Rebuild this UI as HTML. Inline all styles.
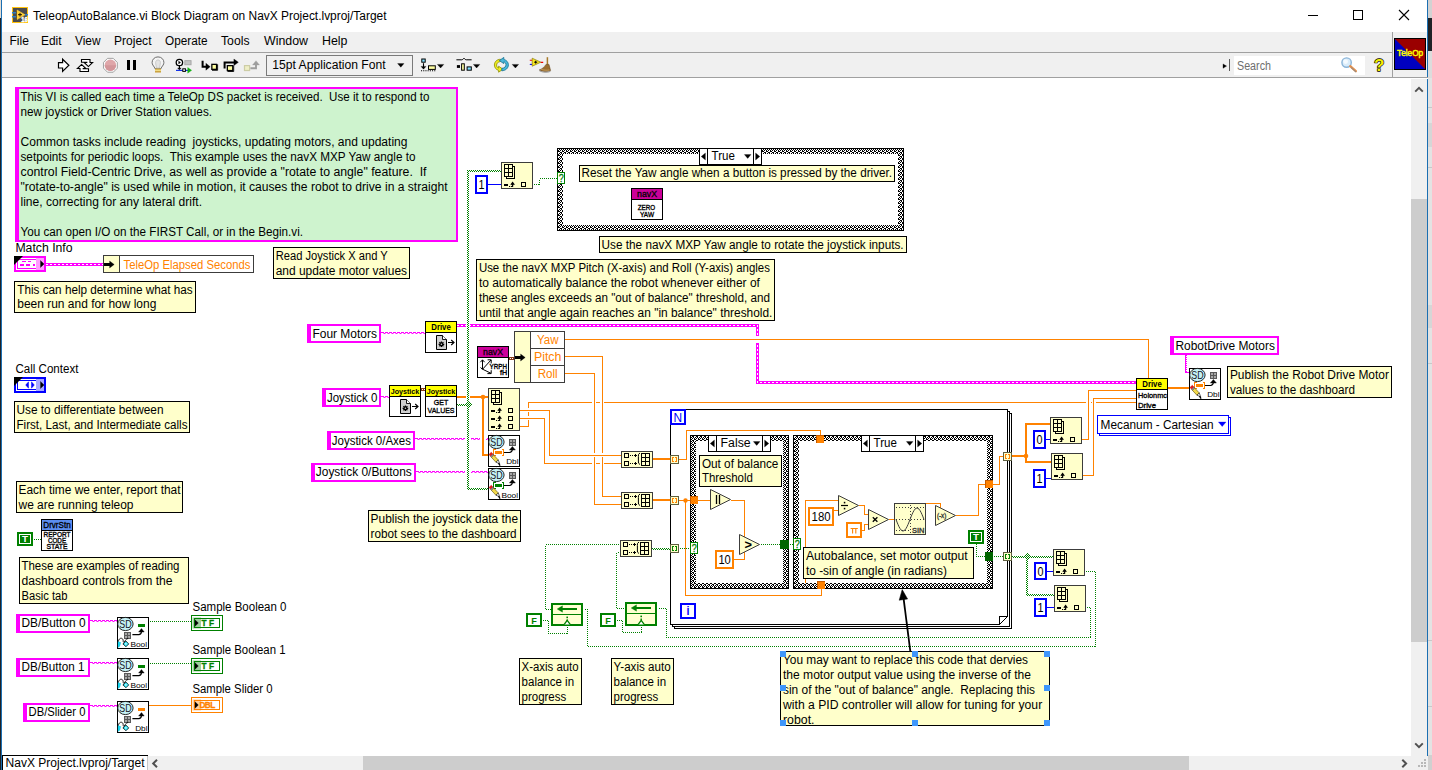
<!DOCTYPE html>
<html><head><meta charset="utf-8"><title>TeleopAutoBalance.vi Block Diagram</title>
<style>
html,body{margin:0;padding:0;background:#fff;overflow:hidden}
body{width:1432px;height:770px;position:relative}
svg{position:absolute;left:0;top:0;display:block}
svg text{font-family:"Liberation Sans",sans-serif;white-space:pre}
.mono{font-family:"Liberation Mono",monospace}
</style></head><body>
<svg width="1432" height="770" viewBox="0 0 1432 770">
<defs>
<pattern id="chk" width="2" height="2" patternUnits="userSpaceOnUse"><rect width="2" height="2" fill="#fff"/><rect width="1" height="1" fill="#000"/><rect x="1" y="1" width="1" height="1" fill="#000"/></pattern>
</defs>
<rect x="0" y="0" width="2" height="770" fill="#1f2226" />
<rect x="0" y="0" width="1" height="18" fill="#e4ddd6" />
<rect x="1" y="0" width="1" height="770" fill="#1b6fb2" />
<rect x="1428" y="0" width="4" height="770" fill="#e3e3e3" />
<rect x="1428" y="0" width="4" height="18" fill="#d2d2d2" />
<rect x="1428" y="18" width="4" height="33" fill="#1f2226" />
<rect x="1428" y="51" width="4" height="27" fill="#dcdcdc" />
<rect x="1428" y="107" width="4" height="1" fill="#c8c8c8" />
<rect x="1428" y="123" width="4" height="24" fill="#d6d6d6" />
<rect x="1428" y="167" width="4" height="1" fill="#c8c8c8" />
<rect x="1428" y="305" width="4" height="23" fill="#d6d6d6" />
<rect x="1428" y="363" width="4" height="1" fill="#c8c8c8" />
<rect x="1428" y="640" width="4" height="1" fill="#c8c8c8" />
<rect x="1428" y="706" width="4" height="1" fill="#c8c8c8" />
<rect x="1428" y="755" width="4" height="15" fill="#d0d0d0" />
<rect x="1427" y="0" width="1" height="770" fill="#1b6fb2" />
<rect x="2" y="0" width="1425" height="32" fill="#fff" />
<rect x="12.5" y="7.5" width="15" height="15" fill="#4b4b4d" stroke="#ffc20e" stroke-width="1" />
<path d="M12 12.7h4M12 16.7h4M25 14.7h3" stroke="#2f7fc1" stroke-width="1.6" fill="none" />
<path d="M16.5 10.5v9" stroke="#2a2a2a" stroke-width="1" fill="none" />
<path d="M17 10 L25 14.8 L17 19.5Z" stroke="#ffd23a" stroke-width="0.6" fill="#ffcf33" />
<path d="M18 14.7h4M20 12.9v3.6" stroke="#000" stroke-width="0.9" fill="none" />
<text x="21.2" y="22.0" font-size="7.4" fill="#fff" font-weight="bold" textLength="6.4" lengthAdjust="spacingAndGlyphs" stroke="#fff" stroke-width="0.5">16</text>
<text x="33.0" y="19.9" font-size="12" fill="#000" textLength="353.5" lengthAdjust="spacingAndGlyphs" >TeleopAutoBalance.vi Block Diagram on NavX Project.lvproj/Target</text>
<path d="M1308 15.5h10" stroke="#000" stroke-width="1" fill="none" shape-rendering="crispEdges"/>
<rect x="1353.5" y="10.5" width="9" height="9" fill="none" stroke="#000" stroke-width="1" shape-rendering="crispEdges"/>
<path d="M1399 10 L1409 20 M1409 10 L1399 20" stroke="#000" stroke-width="1.1" fill="none" />
<rect x="2" y="32" width="1425" height="46" fill="#f0f0f0" />
<text x="9.4" y="45.3" font-size="12" fill="#000" textLength="19.5" lengthAdjust="spacingAndGlyphs" >File</text>
<text x="41.0" y="45.3" font-size="12" fill="#000" textLength="20.5" lengthAdjust="spacingAndGlyphs" >Edit</text>
<text x="75.0" y="45.3" font-size="12" fill="#000" textLength="25.5" lengthAdjust="spacingAndGlyphs" >View</text>
<text x="114.0" y="45.3" font-size="12" fill="#000" textLength="37.5" lengthAdjust="spacingAndGlyphs" >Project</text>
<text x="165.0" y="45.3" font-size="12" fill="#000" textLength="42.5" lengthAdjust="spacingAndGlyphs" >Operate</text>
<text x="221.0" y="45.3" font-size="12" fill="#000" textLength="28.5" lengthAdjust="spacingAndGlyphs" >Tools</text>
<text x="264.0" y="45.3" font-size="12" fill="#000" textLength="44.0" lengthAdjust="spacingAndGlyphs" >Window</text>
<text x="322.0" y="45.3" font-size="12" fill="#000" textLength="25.5" lengthAdjust="spacingAndGlyphs" >Help</text>
<rect x="2" y="52" width="1391" height="1" fill="#a0a0a0" />
<rect x="2" y="77" width="1426" height="1" fill="#a0a0a0" />
<rect x="2" y="78" width="1426" height="1" fill="#fff" />
<rect x="1392" y="32" width="1" height="46" fill="#a0a0a0" />
<rect x="1394.5" y="38.5" width="31" height="31" fill="#0000c0" stroke="#000" stroke-width="1" />
<path d="M1395 39 H1425 V69 Z" stroke="#9a0000" stroke-width="0" fill="#9a0000" />
<text x="1397.0" y="56.3" font-size="8.6" fill="#ffff00" textLength="26.2" lengthAdjust="spacingAndGlyphs" stroke="#ffff00" stroke-width="0.45">TeleOp</text>
<rect x="2" y="79" width="1409" height="677" fill="#fff" />
<path d="M58.5 62.6H62.6V59.2L68.9 65.3L62.6 71.4V68H58.5Z" stroke="#000" stroke-width="1.2" fill="#fff" />
<path d="M81.5 59.5H90V62.5H92.6L88.4 66.6L84.2 62.5H86.8V62.2H81.5Z" stroke="#000" stroke-width="1.1" fill="#fff" />
<path d="M88.5 71.5H80V68.5H77.4L81.6 64.4L85.8 68.5H83.2V68.8H88.5Z" stroke="#000" stroke-width="1.1" fill="#fff" />
<polygon points="117.33,68.17 113.27,72.23 107.53,72.23 103.47,68.17 103.47,62.43 107.53,58.37 113.27,58.37 117.33,62.43" fill="#fbfbfb" stroke="#8e8e8e" stroke-width="0.8"/>
<circle cx="110.4" cy="65.3" r="5.7" fill="#dfa6a9"/>
<path d="M104.7 65.3a5.7 5.7 0 0 0 11.4 0z" fill="#d3969a"/>
<rect x="127" y="60" width="3" height="10" fill="#000" />
<rect x="133" y="60" width="3" height="10" fill="#000" />
<path d="M158 56.9c-3.5 0-5.9 2.6-5.9 5.5 0 2.2 1.3 3.3 2.1 4.6.5.8.7 1.2.7 1.6h6.2c0-.4.2-.8.7-1.6.8-1.3 2.1-2.4 2.1-4.6 0-2.9-2.4-5.5-5.9-5.5z" stroke="#6e6e6e" stroke-width="1" fill="#f4f4f4" />
<path d="M155.6 62.6c.2-2 1.2-2.6 2.4-2.6s2.2.6 2.4 2.6l-.8 5.4h-3.2z" stroke="#c2c2c2" stroke-width="0.8" fill="#e4e4e4" />
<rect x="155" y="68.6" width="6" height="1.3" fill="#d8b040" />
<rect x="155" y="69.9" width="6" height="1.2" fill="#f0dc88" />
<rect x="155" y="71.1" width="6" height="1.4" fill="#c89c30" />
<circle cx="179.4" cy="62.5" r="3.2" fill="#fff" stroke="#000" stroke-width="1.3"/>
<path d="M178.6 61l2 1.5-2 1.5z" stroke="#000" stroke-width="0.3" fill="#000" />
<path d="M179.4 65.8v3.4" stroke="#000" stroke-width="1.2" fill="none" />
<path d="M177.6 68l1.8 1.9 1.8-1.9z" stroke="#000" stroke-width="0.3" fill="#000" />
<rect x="184.85" y="60.65" width="6.2" height="4.1" fill="#c3c3c3" stroke="#a4a4a4" stroke-width="0.9" />
<path d="M176 70.4h12" stroke="#1432e6" stroke-width="1.2" fill="none" />
<rect x="182.8" y="68.8" width="2.6" height="2.6" fill="#fff" stroke="#000" stroke-width="1" />
<path d="M187.7 67.4l4 2.9-4 2.9z" stroke="#10b010" stroke-width="0.3" fill="#10b010" />
<path d="M202.6 60.8v6h4" stroke="#000" stroke-width="2" fill="none" />
<path d="M205.9 63.2l4.3 3.5-4.3 3.5z" stroke="#000" stroke-width="0.3" fill="#000" />
<rect x="211.85" y="64.35" width="4.7" height="5" fill="#ffffa2" stroke="#000" stroke-width="1.3" />
<path d="M212 70.3h5.6v-6" stroke="#000" stroke-width="0.9" fill="none" />
<rect x="227.35" y="65.65" width="5.4" height="4.9" fill="#ffffa2" stroke="#000" stroke-width="1.3" />
<path d="M227.5 71.5h6.2v-6" stroke="#000" stroke-width="0.9" fill="none" />
<path d="M224.6 68.6v-6.2h9.6" stroke="#000" stroke-width="2" fill="none" />
<path d="M233.9 59l4.5 3.3-4.5 3.3z" stroke="#000" stroke-width="0.3" fill="#000" />
<rect x="244.5" y="65.6" width="5.1" height="4.9" fill="#efefc6" stroke="#cdcda6" stroke-width="1.2" />
<path d="M250.4 68.2h5.6v-3.6" stroke="#9e9e9e" stroke-width="1.9" fill="none" />
<path d="M252.5 65l3.5-4.3 3.5 4.3z" stroke="#9e9e9e" stroke-width="0.3" fill="#9e9e9e" />
<rect x="266.5" y="55.5" width="146" height="20" fill="#f0f0f0" stroke="#7a7a7a" stroke-width="1" />
<text x="272.3" y="69.0" font-size="12" fill="#000" textLength="113.3" lengthAdjust="spacingAndGlyphs" >15pt Application Font</text>
<path d="M397.6 63.6h6.4l-3.2 3.6z" stroke="#000" stroke-width="0.3" fill="#000" />
<rect x="421.8" y="59" width="3.4" height="3.2" fill="#7fe0ff" stroke="#000" stroke-width="1" />
<path d="M423.5 63.2v5" stroke="#000" stroke-width="1.1" fill="none" />
<path d="M421 66.4h5l-2.5 2.8z" stroke="#000" stroke-width="0.3" fill="#000" />
<path d="M421 70.7h15" stroke="#000" stroke-width="1.1" fill="none" stroke-dasharray="1.1 1.1"/>
<rect x="428.5" y="65.8" width="6.8" height="3.6" fill="#ffffa2" stroke="#000" stroke-width="1" />
<path d="M437.4 64.4h6.4l-3.2 3.6z" stroke="#000" stroke-width="0.3" fill="#000" />
<path d="M456.4 59.8h5.4c1.4 0 1.6-1.6 2.2-1.6s.8 1.6 2.2 1.6h5.4" stroke="#000" stroke-width="1" fill="none" />
<rect x="456.9" y="65.1" width="3.1" height="2.8" fill="#000" />
<rect x="461.6" y="63.8" width="2.7" height="6.4" fill="#ffffa2" stroke="#000" stroke-width="1" />
<rect x="467.1" y="66.9" width="4.2" height="3.3" fill="#7fe0ff" stroke="#000" stroke-width="1" />
<path d="M473.4 64.4h6.4l-3.2 3.6z" stroke="#000" stroke-width="0.3" fill="#000" />
<path d="M500.4 59.2c-3.6.3-6 2.6-6 5.8 0 2.6 1.6 4.6 4.2 5.4l0 1.8 4.4-3-4.4-3 0 1.9c-1.3-.5-2-1.6-2-3 0-1.8 1.4-3.2 3.8-3.6z" stroke="#8c8c00" stroke-width="0.8" fill="#eeee20" />
<path d="M501.8 70.8c3.8-.2 6.6-2.6 6.6-6 0-2.6-1.8-4.6-4.6-5.4l0-2-4.4 3.2 4.4 3 0-1.8c1.4.5 2.2 1.6 2.2 3 0 1.8-1.6 3.3-4.2 3.6z" stroke="#107090" stroke-width="0.8" fill="#48b8dc" />
<path d="M512.2 64.4h6.4l-3.2 3.6z" stroke="#000" stroke-width="0.3" fill="#000" />
<path d="M529.8 60.2h2.6M540.6 62.4h2.6" stroke="#f00000" stroke-width="1.1" fill="none" />
<path d="M529.8 64.4h2.6" stroke="#0000f0" stroke-width="1.1" fill="none" />
<path d="M532.2 58.2l8.6 4-8.6 4z" stroke="#8a7a00" stroke-width="0.7" fill="#f8e820" />
<path d="M534.2 62.2h3M535.7 60.8v2.8" stroke="#000" stroke-width="1" fill="none" />
<path d="M547.4 57.2v7.6" stroke="#a87a28" stroke-width="1.5" fill="none" />
<path d="M546 64.4h3l1.6 6.2c-3.4 1.6-7.6 1.2-11.4-.6 2.6-1 5.2-2.8 6.8-5.6z" stroke="#5a3c14" stroke-width="0.5" fill="#9a6e30" />
<path d="M541.2 69.4c2.4.8 5.4 1 8.2.6" stroke="#c8a468" stroke-width="0.8" fill="none" />
<path d="M539.4 70.8c3.6 1.8 7.8 2 11 .6" stroke="#9c9c9c" stroke-width="1" fill="none" />
<path d="M1223 63.9l3.6 2.2-3.6 2.2z" stroke="#000" stroke-width="0.3" fill="#000" />
<rect x="1229" y="59" width="1" height="12" fill="#5a5a5a" shape-rendering="crispEdges"/>
<rect x="1234" y="56" width="131" height="19" fill="#fff" />
<text x="1237.0" y="69.6" font-size="12" fill="#6e6e6e" textLength="34.0" lengthAdjust="spacingAndGlyphs" >Search</text>
<circle cx="1346.6" cy="62.6" r="4.7" fill="#d9ecfa" stroke="#8ab4d8" stroke-width="1.4"/>
<circle cx="1345.6" cy="61.6" r="2.4" fill="#f4faff"/>
<path d="M1350.2 66.2l5.6 5" stroke="#e09050" stroke-width="2.4" fill="none" stroke-linecap="round"/>
<path d="M1351 67.6l5 4.4" stroke="#8a8a8a" stroke-width="1" fill="none" />
<text x="1374.0" y="70.6" font-size="16.5" fill="#f4ee00" font-weight="bold" textLength="10.4" lengthAdjust="spacingAndGlyphs" stroke="#000" stroke-width="1.3" paint-order="stroke" stroke-linejoin="round">?</text>
<path d="M674.5 626v2.5h337v-215.5h-2" stroke="#000" stroke-width="1" fill="none" shape-rendering="crispEdges"/>
<path d="M672.5 624v2.5h337v-215.5h-2" stroke="#000" stroke-width="1" fill="none" shape-rendering="crispEdges"/>
<rect x="670.5" y="409.5" width="337" height="215" fill="#fff" stroke="#000" stroke-width="1" shape-rendering="crispEdges"/>
<rect x="1000" y="624" width="8" height="1" fill="#fff" shape-rendering="crispEdges"/>
<rect x="1007" y="617" width="1" height="8" fill="#fff" shape-rendering="crispEdges"/>
<path d="M999.5 624.5v-8h8" stroke="#000" stroke-width="1" fill="none" shape-rendering="crispEdges"/>
<path d="M1000 624L1007.5 616.5" stroke="#000" stroke-width="1" fill="none" />
<rect x="671" y="410" width="14" height="14" fill="#fff" stroke="#0000ff" stroke-width="2" shape-rendering="crispEdges"/>
<text x="673.6" y="421.6" font-size="12" fill="#0000ff" textLength="8.6" lengthAdjust="spacingAndGlyphs" >N</text>
<rect x="681" y="604" width="14" height="14" fill="#fff" stroke="#0000ff" stroke-width="2" shape-rendering="crispEdges"/>
<text x="686.6" y="615.0" font-size="12" fill="#0000ff" font-weight="bold" textLength="3.0" lengthAdjust="spacingAndGlyphs" >i</text>
<pattern id="cp1" x="2" y="0" width="4" height="4" patternUnits="userSpaceOnUse"><rect width="4" height="4" fill="#fff"/><g fill="#000"><rect x="2" y="0" width="1" height="1"/><rect x="3" y="0" width="1" height="1"/><rect x="1" y="1" width="1" height="1"/><rect x="3" y="1" width="1" height="1"/><rect x="0" y="2" width="1" height="1"/><rect x="2" y="2" width="1" height="1"/><rect x="0" y="3" width="1" height="1"/><rect x="1" y="3" width="1" height="1"/></g></pattern>
<path fill-rule="evenodd" fill="url(#cp1)" d="M557 148h347v83h-347z M563 154v71h335v-71z" shape-rendering="crispEdges"/>
<rect x="557.5" y="148.5" width="346" height="82" fill="none" stroke="#000" stroke-width="1" shape-rendering="crispEdges"/>
<rect x="699.5" y="148.5" width="62" height="16" fill="#fff" stroke="#000" stroke-width="1" shape-rendering="crispEdges"/>
<path d="M707.5 148v17M753.5 148v17" stroke="#000" stroke-width="1" fill="none" shape-rendering="crispEdges"/>
<path d="M705.4 153v7l-4.2-3.5z" stroke="#000" stroke-width="0.3" fill="#000" />
<path d="M755.6 153v7l4.2-3.5z" stroke="#000" stroke-width="0.3" fill="#000" />
<text x="711.6" y="160.4" font-size="12" fill="#000" textLength="23.3" lengthAdjust="spacingAndGlyphs" >True</text>
<path d="M744.4 154.6h6.6l-3.3 3.8z" stroke="#000" stroke-width="0.3" fill="#000" />
<pattern id="cp2" x="2" y="0" width="4" height="4" patternUnits="userSpaceOnUse"><rect width="4" height="4" fill="#fff"/><g fill="#000"><rect x="2" y="0" width="1" height="1"/><rect x="3" y="0" width="1" height="1"/><rect x="1" y="1" width="1" height="1"/><rect x="3" y="1" width="1" height="1"/><rect x="0" y="2" width="1" height="1"/><rect x="2" y="2" width="1" height="1"/><rect x="0" y="3" width="1" height="1"/><rect x="1" y="3" width="1" height="1"/></g></pattern>
<path fill-rule="evenodd" fill="url(#cp2)" d="M690 435h99v154h-99z M696 441v142h87v-142z" shape-rendering="crispEdges"/>
<rect x="690.5" y="435.5" width="98" height="153" fill="none" stroke="#000" stroke-width="1" shape-rendering="crispEdges"/>
<rect x="708.5" y="435.5" width="62" height="16" fill="#fff" stroke="#000" stroke-width="1" shape-rendering="crispEdges"/>
<path d="M716.5 435v17M762.5 435v17" stroke="#000" stroke-width="1" fill="none" shape-rendering="crispEdges"/>
<path d="M714.4 440v7l-4.2-3.5z" stroke="#000" stroke-width="0.3" fill="#000" />
<path d="M764.6 440v7l4.2-3.5z" stroke="#000" stroke-width="0.3" fill="#000" />
<text x="720.6" y="447.4" font-size="12" fill="#000" textLength="30.0" lengthAdjust="spacingAndGlyphs" >False</text>
<path d="M753.4 441.6h6.6l-3.3 3.8z" stroke="#000" stroke-width="0.3" fill="#000" />
<pattern id="cp3" x="2" y="0" width="4" height="4" patternUnits="userSpaceOnUse"><rect width="4" height="4" fill="#fff"/><g fill="#000"><rect x="2" y="0" width="1" height="1"/><rect x="3" y="0" width="1" height="1"/><rect x="1" y="1" width="1" height="1"/><rect x="3" y="1" width="1" height="1"/><rect x="0" y="2" width="1" height="1"/><rect x="2" y="2" width="1" height="1"/><rect x="0" y="3" width="1" height="1"/><rect x="1" y="3" width="1" height="1"/></g></pattern>
<path fill-rule="evenodd" fill="url(#cp3)" d="M793 435h200v154h-200z M799 441v142h188v-142z" shape-rendering="crispEdges"/>
<rect x="793.5" y="435.5" width="199" height="153" fill="none" stroke="#000" stroke-width="1" shape-rendering="crispEdges"/>
<rect x="861.5" y="435.5" width="62" height="16" fill="#fff" stroke="#000" stroke-width="1" shape-rendering="crispEdges"/>
<path d="M869.5 435v17M915.5 435v17" stroke="#000" stroke-width="1" fill="none" shape-rendering="crispEdges"/>
<path d="M867.4 440v7l-4.2-3.5z" stroke="#000" stroke-width="0.3" fill="#000" />
<path d="M917.6 440v7l4.2-3.5z" stroke="#000" stroke-width="0.3" fill="#000" />
<text x="873.6" y="447.4" font-size="12" fill="#000" textLength="23.3" lengthAdjust="spacingAndGlyphs" >True</text>
<path d="M906.4 441.6h6.6l-3.3 3.8z" stroke="#000" stroke-width="0.3" fill="#000" />
<path d="M46 264.5 L104 264.5" stroke="#ff00ff" stroke-width="3" fill="none" shape-rendering="crispEdges" stroke-linejoin="miter"/>
<path d="M46 264.5 L104 264.5" stroke="#fff" stroke-width="1" fill="none" shape-rendering="crispEdges" stroke-dasharray="2 2"/>
<path d="M457 325.5 L757.5 325.5 L757.5 382.5 L1137 382.5" stroke="#ff00ff" stroke-width="3" fill="none" shape-rendering="crispEdges" stroke-linejoin="miter"/>
<path d="M457 325.5 L757.5 325.5 L757.5 382.5 L1137 382.5" stroke="#fff" stroke-width="1" fill="none" shape-rendering="crispEdges" stroke-dasharray="2 2"/>
<rect x="466" y="323" width="4" height="5" fill="#fff" shape-rendering="crispEdges"/>
<rect x="755" y="336" width="5" height="7" fill="#fff" shape-rendering="crispEdges"/>
<path d="M381 332.5 L425 332.5" stroke="#ff00ff" stroke-width="1" fill="none" shape-rendering="crispEdges" stroke-dasharray="3 1"/>
<path d="M383.5 333.5 L425 333.5" stroke="#ff00ff" stroke-width="1" fill="none" stroke-dasharray="2 2"/>
<path d="M381 396.5 L389 396.5" stroke="#ff00ff" stroke-width="1" fill="none" shape-rendering="crispEdges" stroke-dasharray="3 1"/>
<path d="M383.5 397.5 L389 397.5" stroke="#ff00ff" stroke-width="1" fill="none" stroke-dasharray="2 2"/>
<path d="M415 438.5 L488 438.5" stroke="#ff00ff" stroke-width="1" fill="none" shape-rendering="crispEdges" stroke-dasharray="3 1"/>
<path d="M417.5 439.5 L488 439.5" stroke="#ff00ff" stroke-width="1" fill="none" stroke-dasharray="2 2"/>
<rect x="465" y="437" width="6" height="3" fill="#fff" shape-rendering="crispEdges"/>
<rect x="480" y="437" width="6" height="3" fill="#fff" shape-rendering="crispEdges"/>
<path d="M416 471.5 L488 471.5" stroke="#ff00ff" stroke-width="1" fill="none" shape-rendering="crispEdges" stroke-dasharray="3 1"/>
<path d="M418.5 472.5 L488 472.5" stroke="#ff00ff" stroke-width="1" fill="none" stroke-dasharray="2 2"/>
<rect x="465" y="470" width="6" height="3" fill="#fff" shape-rendering="crispEdges"/>
<path d="M90 620.5 L117 620.5" stroke="#ff00ff" stroke-width="1" fill="none" shape-rendering="crispEdges" stroke-dasharray="3 1"/>
<path d="M92.5 621.5 L117 621.5" stroke="#ff00ff" stroke-width="1" fill="none" stroke-dasharray="2 2"/>
<path d="M90 662.5 L117 662.5" stroke="#ff00ff" stroke-width="1" fill="none" shape-rendering="crispEdges" stroke-dasharray="3 1"/>
<path d="M92.5 663.5 L117 663.5" stroke="#ff00ff" stroke-width="1" fill="none" stroke-dasharray="2 2"/>
<path d="M90 705.5 L117 705.5" stroke="#ff00ff" stroke-width="1" fill="none" shape-rendering="crispEdges" stroke-dasharray="3 1"/>
<path d="M92.5 706.5 L117 706.5" stroke="#ff00ff" stroke-width="1" fill="none" stroke-dasharray="2 2"/>
<rect x="1185" y="355" width="1" height="18" fill="#ff00ff" shape-rendering="crispEdges"/>
<path d="M1186.5 355v17" stroke="#ff00ff" stroke-width="1" fill="none" shape-rendering="crispEdges" stroke-dasharray="1 1"/>
<rect x="1185" y="372" width="5" height="1" fill="#ff00ff" shape-rendering="crispEdges"/>
<path d="M421 389.5h4" stroke="#8a3a1a" stroke-width="1" fill="none" shape-rendering="crispEdges" stroke-dasharray="1 1"/>
<path d="M421 388.5h4M421 390.5h4" stroke="#8a3a1a" stroke-width="1" fill="none" shape-rendering="crispEdges"/>
<path d="M509 358.5h5" stroke="#8a3a1a" stroke-width="1" fill="none" shape-rendering="crispEdges" stroke-dasharray="1 1"/>
<path d="M509 357.5h5M509 359.5h5" stroke="#8a3a1a" stroke-width="1" fill="none" shape-rendering="crispEdges"/>
<path d="M519 426.5 L528.5 426.5 L528.5 402.5 L1137 402.5" stroke="#ff8200" stroke-width="1" fill="none" shape-rendering="crispEdges"/>
<rect x="528" y="408" width="1" height="4" fill="#fff" shape-rendering="crispEdges"/>
<rect x="528" y="416" width="1" height="4" fill="#fff" shape-rendering="crispEdges"/>
<rect x="592" y="402" width="4" height="1" fill="#fff" shape-rendering="crispEdges"/>
<rect x="600" y="402" width="4" height="1" fill="#fff" shape-rendering="crispEdges"/>
<path d="M519 418.5 L544.5 418.5 L544.5 463.5 L622 463.5" stroke="#ff8200" stroke-width="1" fill="none" shape-rendering="crispEdges"/>
<rect x="592" y="463" width="4" height="1" fill="#fff" shape-rendering="crispEdges"/>
<rect x="600" y="463" width="4" height="1" fill="#fff" shape-rendering="crispEdges"/>
<path d="M564 356.5 L602.5 356.5 L602.5 496.5 L622 496.5" stroke="#ff8200" stroke-width="1" fill="none" shape-rendering="crispEdges"/>
<path d="M564 373.5 L594.5 373.5 L594.5 504.5 L622 504.5" stroke="#ff8200" stroke-width="1" fill="none" shape-rendering="crispEdges"/>
<rect x="594" y="453" width="1" height="4" fill="#fff" shape-rendering="crispEdges"/>
<rect x="602" y="453" width="1" height="4" fill="#fff" shape-rendering="crispEdges"/>
<path d="M519 410.5 L549.5 410.5 L549.5 455.5 L622 455.5" stroke="#ff8200" stroke-width="1" fill="none" shape-rendering="crispEdges"/>
<path d="M564 339.5 L1148.5 339.5 L1148.5 379" stroke="#ff8200" stroke-width="1" fill="none" shape-rendering="crispEdges"/>
<rect x="1086" y="402" width="5" height="1" fill="#fff" shape-rendering="crispEdges"/>
<rect x="1092" y="402" width="4" height="1" fill="#fff" shape-rendering="crispEdges"/>
<path d="M679 459.5 L686.5 459.5 L686.5 430.5 L820.5 430.5 L820.5 436" stroke="#ff8200" stroke-width="1" fill="none" shape-rendering="crispEdges"/>
<path d="M679 500.5 L691 500.5" stroke="#ff8200" stroke-width="1" fill="none" shape-rendering="crispEdges"/>
<path d="M685.5 500 L685.5 595.5 L821.5 595.5 L821.5 589" stroke="#ff8200" stroke-width="1" fill="none" shape-rendering="crispEdges"/>
<circle cx="685.5" cy="500.5" r="2.2" fill="#ff8200"/>
<path d="M698 500.5 L711 500.5" stroke="#ff8200" stroke-width="1" fill="none" shape-rendering="crispEdges"/>
<path d="M731 500.5 L744.5 500.5 L744.5 539" stroke="#ff8200" stroke-width="1" fill="none" shape-rendering="crispEdges"/>
<path d="M733 559.5 L744.5 559.5 L744.5 551" stroke="#ff8200" stroke-width="1" fill="none" shape-rendering="crispEdges"/>
<path d="M839 500.5 L805.5 500.5 L805.5 583" stroke="#ff8200" stroke-width="1" fill="none" shape-rendering="crispEdges"/>
<path d="M833 510.5 L839 510.5" stroke="#ff8200" stroke-width="1" fill="none" shape-rendering="crispEdges"/>
<path d="M859 505.5 L864.5 505.5 L864.5 514.5 L869 514.5" stroke="#ff8200" stroke-width="1" fill="none" shape-rendering="crispEdges"/>
<path d="M862 530.5 L864.5 530.5 L864.5 524.5 L869 524.5" stroke="#ff8200" stroke-width="1" fill="none" shape-rendering="crispEdges"/>
<path d="M889 519.5 L895 519.5" stroke="#ff8200" stroke-width="1" fill="none" shape-rendering="crispEdges"/>
<path d="M926 503.5 L940.5 503.5 L940.5 509" stroke="#ff8200" stroke-width="1" fill="none" shape-rendering="crispEdges"/>
<path d="M956 515.5 L978.5 515.5 L978.5 484.5 L986 484.5" stroke="#ff8200" stroke-width="1" fill="none" shape-rendering="crispEdges"/>
<path d="M993 484.5 L999.5 484.5 L999.5 456.5 L1004 456.5" stroke="#ff8200" stroke-width="1" fill="none" shape-rendering="crispEdges"/>
<path d="M1081 439.5 L1088.5 439.5 L1088.5 390.5 L1137 390.5" stroke="#ff8200" stroke-width="1" fill="none" shape-rendering="crispEdges"/>
<path d="M1082 475.5 L1093.5 475.5 L1093.5 398.5 L1137 398.5" stroke="#ff8200" stroke-width="1" fill="none" shape-rendering="crispEdges"/>
<path d="M149 705.5 L192 705.5" stroke="#ff8200" stroke-width="1" fill="none" shape-rendering="crispEdges"/>
<path d="M458 397 L489 397" stroke="#ff8200" stroke-width="2" fill="none" shape-rendering="crispEdges" stroke-linejoin="miter" stroke-linecap="square"/>
<rect x="466" y="395" width="4" height="4" fill="#fff" shape-rendering="crispEdges"/>
<path d="M483 397 L483 455 L489 455" stroke="#ff8200" stroke-width="2" fill="none" shape-rendering="crispEdges" stroke-linejoin="miter" stroke-linecap="square"/>
<circle cx="483" cy="397" r="2.3" fill="#ff8200"/>
<path d="M654 459 L672 459" stroke="#ff8200" stroke-width="2" fill="none" shape-rendering="crispEdges" stroke-linejoin="miter" stroke-linecap="square"/>
<path d="M654 500 L672 500" stroke="#ff8200" stroke-width="2" fill="none" shape-rendering="crispEdges" stroke-linejoin="miter" stroke-linecap="square"/>
<path d="M1013 456 L1026 456" stroke="#ff8200" stroke-width="2" fill="none" shape-rendering="crispEdges" stroke-linejoin="miter" stroke-linecap="square"/>
<path d="M1051 424 L1026 424 L1026 462 L1052 462" stroke="#ff8200" stroke-width="2" fill="none" shape-rendering="crispEdges" stroke-linejoin="miter" stroke-linecap="square"/>
<circle cx="1026" cy="456" r="2.3" fill="#ff8200"/>
<path d="M1169 388 L1190 388" stroke="#ff8200" stroke-width="2" fill="none" shape-rendering="crispEdges" stroke-linejoin="miter" stroke-linecap="square"/>
<path d="M488 184.5 L502 184.5" stroke="#0000ff" stroke-width="1" fill="none" shape-rendering="crispEdges"/>
<path d="M1046 439.5 L1051 439.5" stroke="#0000ff" stroke-width="1" fill="none" shape-rendering="crispEdges"/>
<path d="M1046 478.5 L1052 478.5" stroke="#0000ff" stroke-width="1" fill="none" shape-rendering="crispEdges"/>
<path d="M1047 571.5 L1054 571.5" stroke="#0000ff" stroke-width="1" fill="none" shape-rendering="crispEdges"/>
<path d="M1047 607.5 L1055 607.5" stroke="#0000ff" stroke-width="1" fill="none" shape-rendering="crispEdges"/>
<path d="M457 404.5 L468 404.5" stroke="#008000" stroke-width="1" fill="none" shape-rendering="crispEdges" stroke-dasharray="1 1"/>
<path d="M458 405.5 L468 405.5" stroke="#008000" stroke-width="1" fill="none" shape-rendering="crispEdges" stroke-dasharray="1 1"/>
<path d="M467.5 170 L467.5 489" stroke="#008000" stroke-width="1" fill="none" shape-rendering="crispEdges" stroke-dasharray="1 1"/>
<path d="M468.5 171 L468.5 489" stroke="#008000" stroke-width="1" fill="none" shape-rendering="crispEdges" stroke-dasharray="1 1"/>
<path d="M467 170.5 L502 170.5" stroke="#008000" stroke-width="1" fill="none" shape-rendering="crispEdges" stroke-dasharray="1 1"/>
<path d="M468 171.5 L502 171.5" stroke="#008000" stroke-width="1" fill="none" shape-rendering="crispEdges" stroke-dasharray="1 1"/>
<path d="M467 488.5 L489 488.5" stroke="#008000" stroke-width="1" fill="none" shape-rendering="crispEdges" stroke-dasharray="1 1"/>
<path d="M468 489.5 L489 489.5" stroke="#008000" stroke-width="1" fill="none" shape-rendering="crispEdges" stroke-dasharray="1 1"/>
<rect x="465" y="404" width="1" height="1" fill="#008000" shape-rendering="crispEdges"/>
<rect x="466" y="403" width="1" height="1" fill="#008000" shape-rendering="crispEdges"/>
<rect x="466" y="405" width="1" height="1" fill="#008000" shape-rendering="crispEdges"/>
<rect x="467" y="402" width="1" height="1" fill="#008000" shape-rendering="crispEdges"/>
<rect x="467" y="404" width="1" height="1" fill="#008000" shape-rendering="crispEdges"/>
<rect x="467" y="406" width="1" height="1" fill="#008000" shape-rendering="crispEdges"/>
<rect x="468" y="401" width="1" height="1" fill="#008000" shape-rendering="crispEdges"/>
<rect x="468" y="403" width="1" height="1" fill="#008000" shape-rendering="crispEdges"/>
<rect x="468" y="405" width="1" height="1" fill="#008000" shape-rendering="crispEdges"/>
<rect x="468" y="407" width="1" height="1" fill="#008000" shape-rendering="crispEdges"/>
<rect x="469" y="402" width="1" height="1" fill="#008000" shape-rendering="crispEdges"/>
<rect x="469" y="404" width="1" height="1" fill="#008000" shape-rendering="crispEdges"/>
<rect x="469" y="406" width="1" height="1" fill="#008000" shape-rendering="crispEdges"/>
<rect x="470" y="403" width="1" height="1" fill="#008000" shape-rendering="crispEdges"/>
<rect x="470" y="405" width="1" height="1" fill="#008000" shape-rendering="crispEdges"/>
<rect x="471" y="404" width="1" height="1" fill="#008000" shape-rendering="crispEdges"/>
<path d="M533.5 184.5 L539.5 184.5 L539.5 178.5 L557.5 178.5" stroke="#008000" stroke-width="1" fill="none" shape-rendering="crispEdges" stroke-dasharray="1 1"/>
<path d="M33.5 539.5 L41.5 539.5" stroke="#008000" stroke-width="1" fill="none" shape-rendering="crispEdges" stroke-dasharray="1 1"/>
<path d="M149.5 621.5 L191.5 621.5" stroke="#008000" stroke-width="1" fill="none" shape-rendering="crispEdges" stroke-dasharray="1 1"/>
<path d="M149.5 663.5 L191.5 663.5" stroke="#008000" stroke-width="1" fill="none" shape-rendering="crispEdges" stroke-dasharray="1 1"/>
<path d="M620.5 544.5 L545.5 544.5 L545.5 609.5 L551.5 609.5" stroke="#008000" stroke-width="1" fill="none" shape-rendering="crispEdges" stroke-dasharray="1 1"/>
<path d="M620.5 552.5 L616.5 552.5 L616.5 608.5 L625.5 608.5" stroke="#008000" stroke-width="1" fill="none" shape-rendering="crispEdges" stroke-dasharray="1 1"/>
<path d="M652 548.5 L672 548.5" stroke="#008000" stroke-width="1" fill="none" shape-rendering="crispEdges" stroke-dasharray="1 1"/>
<path d="M653 549.5 L672 549.5" stroke="#008000" stroke-width="1" fill="none" shape-rendering="crispEdges" stroke-dasharray="1 1"/>
<path d="M679.5 548.5 L690.5 548.5" stroke="#008000" stroke-width="1" fill="none" shape-rendering="crispEdges" stroke-dasharray="1 1"/>
<path d="M760.5 544.5 L780.5 544.5" stroke="#008000" stroke-width="1" fill="none" shape-rendering="crispEdges" stroke-dasharray="1 1"/>
<path d="M789.5 544.5 L793.5 544.5" stroke="#008000" stroke-width="1" fill="none" shape-rendering="crispEdges" stroke-dasharray="1 1"/>
<path d="M976.5 543.5 L976.5 556.5 L985.5 556.5" stroke="#008000" stroke-width="1" fill="none" shape-rendering="crispEdges" stroke-dasharray="1 1"/>
<path d="M993.5 556.5 L1003.5 556.5" stroke="#008000" stroke-width="1" fill="none" shape-rendering="crispEdges" stroke-dasharray="1 1"/>
<path d="M1012 556.5 L1054 556.5" stroke="#008000" stroke-width="1" fill="none" shape-rendering="crispEdges" stroke-dasharray="1 1"/>
<path d="M1013 557.5 L1054 557.5" stroke="#008000" stroke-width="1" fill="none" shape-rendering="crispEdges" stroke-dasharray="1 1"/>
<path d="M1026.5 556 L1026.5 595" stroke="#008000" stroke-width="1" fill="none" shape-rendering="crispEdges" stroke-dasharray="1 1"/>
<path d="M1027.5 557 L1027.5 595" stroke="#008000" stroke-width="1" fill="none" shape-rendering="crispEdges" stroke-dasharray="1 1"/>
<path d="M1026 594.5 L1055 594.5" stroke="#008000" stroke-width="1" fill="none" shape-rendering="crispEdges" stroke-dasharray="1 1"/>
<path d="M1027 595.5 L1055 595.5" stroke="#008000" stroke-width="1" fill="none" shape-rendering="crispEdges" stroke-dasharray="1 1"/>
<rect x="1024" y="556" width="1" height="1" fill="#008000" shape-rendering="crispEdges"/>
<rect x="1025" y="555" width="1" height="1" fill="#008000" shape-rendering="crispEdges"/>
<rect x="1025" y="557" width="1" height="1" fill="#008000" shape-rendering="crispEdges"/>
<rect x="1026" y="554" width="1" height="1" fill="#008000" shape-rendering="crispEdges"/>
<rect x="1026" y="556" width="1" height="1" fill="#008000" shape-rendering="crispEdges"/>
<rect x="1026" y="558" width="1" height="1" fill="#008000" shape-rendering="crispEdges"/>
<rect x="1027" y="553" width="1" height="1" fill="#008000" shape-rendering="crispEdges"/>
<rect x="1027" y="555" width="1" height="1" fill="#008000" shape-rendering="crispEdges"/>
<rect x="1027" y="557" width="1" height="1" fill="#008000" shape-rendering="crispEdges"/>
<rect x="1027" y="559" width="1" height="1" fill="#008000" shape-rendering="crispEdges"/>
<rect x="1028" y="554" width="1" height="1" fill="#008000" shape-rendering="crispEdges"/>
<rect x="1028" y="556" width="1" height="1" fill="#008000" shape-rendering="crispEdges"/>
<rect x="1028" y="558" width="1" height="1" fill="#008000" shape-rendering="crispEdges"/>
<rect x="1029" y="555" width="1" height="1" fill="#008000" shape-rendering="crispEdges"/>
<rect x="1029" y="557" width="1" height="1" fill="#008000" shape-rendering="crispEdges"/>
<rect x="1030" y="556" width="1" height="1" fill="#008000" shape-rendering="crispEdges"/>
<path d="M1085.5 571.5 L1095.5 571.5 L1095.5 646.5 L587.5 646.5 L587.5 609.5 L583.5 609.5" stroke="#008000" stroke-width="1" fill="none" shape-rendering="crispEdges" stroke-dasharray="1 1"/>
<path d="M1086.5 607.5 L1090.5 607.5 L1090.5 637.5 L666.5 637.5 L666.5 608.5 L657.5 608.5" stroke="#008000" stroke-width="1" fill="none" shape-rendering="crispEdges" stroke-dasharray="1 1"/>
<path d="M542.5 620.5 L548.5 620.5 L548.5 633.5 L567.5 633.5 L567.5 626.5" stroke="#008000" stroke-width="1" fill="none" shape-rendering="crispEdges" stroke-dasharray="1 1"/>
<path d="M616.5 620.5 L622.5 620.5 L622.5 632.5 L641.5 632.5 L641.5 626.5" stroke="#008000" stroke-width="1" fill="none" shape-rendering="crispEdges" stroke-dasharray="1 1"/>
<rect x="15" y="257" width="30" height="14" fill="#fff" stroke="#ff00ff" stroke-width="2" shape-rendering="crispEdges"/>
<rect x="17.5" y="259.5" width="25" height="9" fill="#fff" stroke="#ff00ff" stroke-width="1" shape-rendering="crispEdges"/>
<rect x="36" y="258" width="8" height="12" fill="#ff9cff" shape-rendering="crispEdges"/>
<path d="M14 256h9l-9 9z" stroke="#000" stroke-width="0" fill="#000" />
<rect x="22" y="261" width="4" height="1" fill="#ff00ff" shape-rendering="crispEdges"/>
<rect x="28" y="261" width="3" height="1" fill="#ff00ff" shape-rendering="crispEdges"/>
<rect x="20" y="264" width="4" height="2" fill="#ff00ff" shape-rendering="crispEdges"/>
<rect x="26" y="264" width="4" height="2" fill="#ff00ff" shape-rendering="crispEdges"/>
<rect x="33" y="264" width="2" height="2" fill="#ff00ff" shape-rendering="crispEdges"/>
<path d="M40.5 260.5v7l3.6-3.5z" stroke="#000" stroke-width="0.3" fill="#000" />
<rect x="103.5" y="255.5" width="150" height="17" fill="#fff" stroke="#3c3c3c" stroke-width="1" shape-rendering="crispEdges"/>
<rect x="104" y="256" width="15" height="16" fill="#ffffcb" shape-rendering="crispEdges"/>
<path d="M119.5 255v18" stroke="#3c3c3c" stroke-width="1" fill="none" shape-rendering="crispEdges"/>
<rect x="104" y="263" width="6" height="3" fill="#000" shape-rendering="crispEdges"/>
<path d="M109.6 261l4.6 3.5-4.6 3.5z" stroke="#000" stroke-width="0.3" fill="#000" />
<text x="123.5" y="268.5" font-size="12" fill="#ff8200" textLength="127.0" lengthAdjust="spacingAndGlyphs" >TeleOp Elapsed Seconds</text>
<rect x="15" y="378" width="30" height="14" fill="#fff" stroke="#0000ff" stroke-width="2" shape-rendering="crispEdges"/>
<rect x="17.5" y="380.5" width="25" height="9" fill="#fff" stroke="#0000ff" stroke-width="1" shape-rendering="crispEdges"/>
<rect x="36" y="379" width="8" height="12" fill="#a8a8ff" shape-rendering="crispEdges"/>
<path d="M14 377h9l-9 9z" stroke="#000" stroke-width="0" fill="#000" />
<path d="M28.5 381.8l-2.8 3.2 2.8 3.2zM31.5 381.8l2.8 3.2-2.8 3.2z" stroke="#0000ff" stroke-width="0.5" fill="#0000ff" />
<path d="M40.5 381.5v7l3.6-3.5z" stroke="#000" stroke-width="0.3" fill="#000" />
<rect x="18" y="533" width="14" height="12" fill="#fff" stroke="#008000" stroke-width="2" shape-rendering="crispEdges"/>
<rect x="20" y="535" width="10" height="8" fill="#008000" shape-rendering="crispEdges"/>
<text x="22.0" y="542.4" font-size="8.6" fill="#fff" font-weight="bold" textLength="6.0" lengthAdjust="spacingAndGlyphs" >T</text>
<rect x="41.5" y="519.5" width="31" height="31" fill="#fff" stroke="#000" stroke-width="1" shape-rendering="crispEdges"/>
<rect x="42" y="520" width="30" height="10" fill="#5b8def" shape-rendering="crispEdges"/>
<rect x="42" y="530" width="30" height="1" fill="#000" shape-rendering="crispEdges"/>
<text x="57.0" y="528.3" font-size="8.2" fill="#000" text-anchor="middle" textLength="27.3" lengthAdjust="spacingAndGlyphs" stroke="#000" stroke-width="0.3">DrvrStn</text>
<text x="57.0" y="536.8" font-size="7.3" fill="#000" text-anchor="middle" textLength="27.0" lengthAdjust="spacingAndGlyphs" stroke="#000" stroke-width="0.35">REPORT</text>
<text x="57.0" y="542.7" font-size="7.3" fill="#000" text-anchor="middle" textLength="18.2" lengthAdjust="spacingAndGlyphs" stroke="#000" stroke-width="0.35">CODE</text>
<text x="57.0" y="548.8" font-size="7.3" fill="#000" text-anchor="middle" textLength="21.0" lengthAdjust="spacingAndGlyphs" stroke="#000" stroke-width="0.35">STATE</text>
<rect x="117.5" y="617.5" width="31" height="31" fill="#fff" stroke="#000" stroke-width="1" shape-rendering="crispEdges"/>
<ellipse cx="125.4" cy="624" rx="7.7" ry="6.6" fill="#c6f1f5" stroke="#111" stroke-width="0.9"/>
<text x="119.3" y="627.9" font-size="10.2" fill="#15151f" textLength="12.3" lengthAdjust="spacingAndGlyphs" >SD</text>
<rect x="138" y="624" width="7" height="3" fill="#008000" shape-rendering="crispEdges"/>
<rect x="124" y="632" width="7" height="7" fill="#5a5a5a" shape-rendering="crispEdges"/>
<rect x="125" y="633" width="2" height="2" fill="#a8a8a8" shape-rendering="crispEdges"/>
<rect x="128" y="633" width="2" height="2" fill="#a8a8a8" shape-rendering="crispEdges"/>
<rect x="125" y="636" width="2" height="2" fill="#a8a8a8" shape-rendering="crispEdges"/>
<rect x="128" y="636" width="2" height="2" fill="#a8a8a8" shape-rendering="crispEdges"/>
<path d="M132.4 634.6h6.4q2.4 0 2.7-3.2" stroke="#000" stroke-width="1.2" fill="none" />
<path d="M138.6 632l2.9-3.4 2.7 3.4z" stroke="#000" stroke-width="0.4" fill="#000" />
<path d="M118.2 642.5c.3-3.4 2-4.6 3.4-4.2s1.7 1.8 1.6 3.6M123.3 644.5c1-3.2 2.6-5.6 5-6.2" stroke="#000" stroke-width="0.9" fill="none" />
<path d="M118 641.6l2.8 1-1 3.6-1.8 1.2z" stroke="#00b8d8" stroke-width="0.3" fill="#18d8f0" />
<path d="M125.9 641l2.9 2.9-2.9 2.9-2.9-2.9z" stroke="#000" stroke-width="0.7" fill="#30e0f4" />
<rect x="125.2" y="643.2" width="1.4" height="1.4" fill="#eaffff" />
<text x="130.4" y="646.8" font-size="8.1" fill="#000" textLength="16.7" lengthAdjust="spacingAndGlyphs" >Bool</text>
<rect x="117.5" y="658.5" width="31" height="31" fill="#fff" stroke="#000" stroke-width="1" shape-rendering="crispEdges"/>
<ellipse cx="125.4" cy="665" rx="7.7" ry="6.6" fill="#c6f1f5" stroke="#111" stroke-width="0.9"/>
<text x="119.3" y="668.9" font-size="10.2" fill="#15151f" textLength="12.3" lengthAdjust="spacingAndGlyphs" >SD</text>
<rect x="138" y="665" width="7" height="3" fill="#008000" shape-rendering="crispEdges"/>
<rect x="124" y="673" width="7" height="7" fill="#5a5a5a" shape-rendering="crispEdges"/>
<rect x="125" y="674" width="2" height="2" fill="#a8a8a8" shape-rendering="crispEdges"/>
<rect x="128" y="674" width="2" height="2" fill="#a8a8a8" shape-rendering="crispEdges"/>
<rect x="125" y="677" width="2" height="2" fill="#a8a8a8" shape-rendering="crispEdges"/>
<rect x="128" y="677" width="2" height="2" fill="#a8a8a8" shape-rendering="crispEdges"/>
<path d="M132.4 675.6h6.4q2.4 0 2.7-3.2" stroke="#000" stroke-width="1.2" fill="none" />
<path d="M138.6 673l2.9-3.4 2.7 3.4z" stroke="#000" stroke-width="0.4" fill="#000" />
<path d="M118.2 683.5c.3-3.4 2-4.6 3.4-4.2s1.7 1.8 1.6 3.6M123.3 685.5c1-3.2 2.6-5.6 5-6.2" stroke="#000" stroke-width="0.9" fill="none" />
<path d="M118 682.6l2.8 1-1 3.6-1.8 1.2z" stroke="#00b8d8" stroke-width="0.3" fill="#18d8f0" />
<path d="M125.9 682l2.9 2.9-2.9 2.9-2.9-2.9z" stroke="#000" stroke-width="0.7" fill="#30e0f4" />
<rect x="125.2" y="684.2" width="1.4" height="1.4" fill="#eaffff" />
<text x="130.4" y="687.8" font-size="8.1" fill="#000" textLength="16.7" lengthAdjust="spacingAndGlyphs" >Bool</text>
<rect x="117.5" y="701.5" width="31" height="31" fill="#fff" stroke="#000" stroke-width="1" shape-rendering="crispEdges"/>
<ellipse cx="125.4" cy="708" rx="7.7" ry="6.6" fill="#c6f1f5" stroke="#111" stroke-width="0.9"/>
<text x="119.3" y="711.9" font-size="10.2" fill="#15151f" textLength="12.3" lengthAdjust="spacingAndGlyphs" >SD</text>
<rect x="138" y="708" width="7" height="3" fill="#ff8200" shape-rendering="crispEdges"/>
<rect x="124" y="716" width="7" height="7" fill="#5a5a5a" shape-rendering="crispEdges"/>
<rect x="125" y="717" width="2" height="2" fill="#a8a8a8" shape-rendering="crispEdges"/>
<rect x="128" y="717" width="2" height="2" fill="#a8a8a8" shape-rendering="crispEdges"/>
<rect x="125" y="720" width="2" height="2" fill="#a8a8a8" shape-rendering="crispEdges"/>
<rect x="128" y="720" width="2" height="2" fill="#a8a8a8" shape-rendering="crispEdges"/>
<path d="M132.4 718.6h6.4q2.4 0 2.7-3.2" stroke="#000" stroke-width="1.2" fill="none" />
<path d="M138.6 716l2.9-3.4 2.7 3.4z" stroke="#000" stroke-width="0.4" fill="#000" />
<path d="M118.2 726.5c.3-3.4 2-4.6 3.4-4.2s1.7 1.8 1.6 3.6M123.3 728.5c1-3.2 2.6-5.6 5-6.2" stroke="#000" stroke-width="0.9" fill="none" />
<path d="M118 725.6l2.8 1-1 3.6-1.8 1.2z" stroke="#00b8d8" stroke-width="0.3" fill="#18d8f0" />
<path d="M125.9 725l2.9 2.9-2.9 2.9-2.9-2.9z" stroke="#000" stroke-width="0.7" fill="#30e0f4" />
<rect x="125.2" y="727.2" width="1.4" height="1.4" fill="#eaffff" />
<text x="135.2" y="730.8" font-size="8.1" fill="#000" textLength="12.3" lengthAdjust="spacingAndGlyphs" >Dbl</text>
<rect x="191.5" y="615.5" width="31" height="15" fill="#fff" stroke="#008000" stroke-width="1" shape-rendering="crispEdges"/>
<rect x="194.5" y="618.5" width="25" height="9" fill="#fff" stroke="#008000" stroke-width="1" shape-rendering="crispEdges"/>
<rect x="192.5" y="617.5" width="8.5" height="11" fill="#008000" opacity="0.38"/>
<path d="M195 619.8v6.4l3.4-3.2z" stroke="#000" stroke-width="0.3" fill="#000" />
<text x="201.4" y="625.8" font-size="8.3" fill="#008000" font-weight="bold" textLength="12.7" lengthAdjust="spacing" stroke="#008000" stroke-width="0.3">TF</text>
<rect x="191.5" y="658.5" width="31" height="15" fill="#fff" stroke="#008000" stroke-width="1" shape-rendering="crispEdges"/>
<rect x="194.5" y="661.5" width="25" height="9" fill="#fff" stroke="#008000" stroke-width="1" shape-rendering="crispEdges"/>
<rect x="192.5" y="660.5" width="8.5" height="11" fill="#008000" opacity="0.38"/>
<path d="M195 662.8v6.4l3.4-3.2z" stroke="#000" stroke-width="0.3" fill="#000" />
<text x="201.4" y="668.8" font-size="8.3" fill="#008000" font-weight="bold" textLength="12.7" lengthAdjust="spacing" stroke="#008000" stroke-width="0.3">TF</text>
<rect x="191.5" y="697.5" width="31" height="15" fill="#fff" stroke="#ff8200" stroke-width="1" shape-rendering="crispEdges"/>
<rect x="194.5" y="700.5" width="25" height="9" fill="#fff" stroke="#ff8200" stroke-width="1" shape-rendering="crispEdges"/>
<rect x="192.5" y="699.5" width="8.5" height="11" fill="#ff8200" opacity="0.38"/>
<path d="M195 701.8v6.4l3.4-3.2z" stroke="#000" stroke-width="0.3" fill="#000" />
<text x="199.4" y="707.8" font-size="8.3" fill="#ff8200" font-weight="bold" textLength="16.0" lengthAdjust="spacing" stroke="#ff8200" stroke-width="0.3">DBL</text>
<rect x="425.5" y="321.5" width="31" height="31" fill="#fff" stroke="#000" stroke-width="1" shape-rendering="crispEdges"/>
<rect x="426" y="322" width="30" height="10" fill="#ffff00" shape-rendering="crispEdges"/>
<rect x="426" y="332" width="30" height="1" fill="#000" shape-rendering="crispEdges"/>
<text x="441.0" y="330.3" font-size="8.6" fill="#000" font-weight="bold" text-anchor="middle" textLength="19.5" lengthAdjust="spacingAndGlyphs" >Drive</text>
<path d="M436.5 335.5h6l4 4v10h-10z" stroke="#000" stroke-width="1" fill="#d0d0d0" />
<path d="M442.5 335.5v4h4" stroke="#000" stroke-width="0.9" fill="#fff" />
<path d="M438.59999999999997 344.3h5.6M441.4 341.5v5.6M439.4 342.3l4 4M443.4 342.3l-4 4" stroke="#000" stroke-width="1.25" fill="none" />
<circle cx="441.4" cy="344.3" r="0.8" fill="#d0d0d0"/>
<path d="M448 342.5h6M451.2 340l2.8 2.5-2.8 2.5" stroke="#000" stroke-width="1.15" fill="none" />
<rect x="389.5" y="385.5" width="31" height="31" fill="#fff" stroke="#000" stroke-width="1" shape-rendering="crispEdges"/>
<rect x="390" y="386" width="30" height="10" fill="#ffff00" shape-rendering="crispEdges"/>
<rect x="390" y="396" width="30" height="1" fill="#000" shape-rendering="crispEdges"/>
<text x="405.0" y="394.3" font-size="7.6" fill="#000" font-weight="bold" text-anchor="middle" textLength="28.5" lengthAdjust="spacingAndGlyphs" >Joystick</text>
<path d="M400.5 399.5h6l4 4v10h-10z" stroke="#000" stroke-width="1" fill="#d0d0d0" />
<path d="M406.5 399.5v4h4" stroke="#000" stroke-width="0.9" fill="#fff" />
<path d="M402.59999999999997 408.3h5.6M405.4 405.5v5.6M403.4 406.3l4 4M407.4 406.3l-4 4" stroke="#000" stroke-width="1.25" fill="none" />
<circle cx="405.4" cy="408.3" r="0.8" fill="#d0d0d0"/>
<path d="M412 406.5h6M415.2 404l2.8 2.5-2.8 2.5" stroke="#000" stroke-width="1.15" fill="none" />
<rect x="425.5" y="385.5" width="31" height="31" fill="#fff" stroke="#000" stroke-width="1" shape-rendering="crispEdges"/>
<rect x="426" y="386" width="30" height="10" fill="#ffff00" shape-rendering="crispEdges"/>
<rect x="426" y="396" width="30" height="1" fill="#000" shape-rendering="crispEdges"/>
<text x="441.0" y="394.3" font-size="7.6" fill="#000" font-weight="bold" text-anchor="middle" textLength="28.5" lengthAdjust="spacingAndGlyphs" >Joystick</text>
<text x="441.0" y="404.6" font-size="8" fill="#000" text-anchor="middle" textLength="14.5" lengthAdjust="spacingAndGlyphs" stroke="#000" stroke-width="0.35">GET</text>
<text x="441.0" y="412.8" font-size="8" fill="#000" text-anchor="middle" textLength="27.0" lengthAdjust="spacingAndGlyphs" stroke="#000" stroke-width="0.35">VALUES</text>
<rect x="477.5" y="346.5" width="31" height="31" fill="#fff" stroke="#000" stroke-width="1" shape-rendering="crispEdges"/>
<rect x="478" y="347" width="30" height="10" fill="#cc0099" shape-rendering="crispEdges"/>
<rect x="478" y="357" width="30" height="1" fill="#000" shape-rendering="crispEdges"/>
<text x="493.0" y="355.3" font-size="9.6" fill="#000" text-anchor="middle" textLength="20.0" lengthAdjust="spacingAndGlyphs" stroke="#000" stroke-width="0.3">navX</text>
<path d="M482.5 360v9.3M480.4 362.2l2.1-2.4 2.1 2.4M480.6 367.4l1.9 2.2" stroke="#000" stroke-width="1" fill="none" />
<path d="M482.8 369l8.2-9M487.6 359.8h3.6v3.6" stroke="#000" stroke-width="1" fill="none" />
<path d="M482.8 369.3l8.2 4M487.4 373.6h3.8v-3.4" stroke="#000" stroke-width="1" fill="none" />
<text x="489.6" y="368.6" font-size="7" fill="#000" textLength="17.5" lengthAdjust="spacingAndGlyphs" stroke="#000" stroke-width="0.35">YRPH</text>
<text x="500.0" y="374.5" font-size="7" fill="#000" textLength="7.2" lengthAdjust="spacingAndGlyphs" stroke="#000" stroke-width="0.35">fH</text>
<rect x="514.5" y="331.5" width="50" height="51" fill="#fff" stroke="#3c3c3c" stroke-width="1" shape-rendering="crispEdges"/>
<rect x="515" y="332" width="15" height="50" fill="#ffffcb" shape-rendering="crispEdges"/>
<path d="M530.5 331v52M530 348.5h35M530 365.5h35" stroke="#3c3c3c" stroke-width="1" fill="none" shape-rendering="crispEdges"/>
<rect x="515" y="356" width="6" height="3" fill="#000" shape-rendering="crispEdges"/>
<path d="M520.6 354l4.6 3.5-4.6 3.5z" stroke="#000" stroke-width="0.3" fill="#000" />
<text x="547.7" y="344.2" font-size="12" fill="#ff8200" text-anchor="middle" textLength="21.5" lengthAdjust="spacingAndGlyphs" >Yaw</text>
<text x="547.7" y="361.2" font-size="12" fill="#ff8200" text-anchor="middle" textLength="27.5" lengthAdjust="spacingAndGlyphs" >Pitch</text>
<text x="547.7" y="378.2" font-size="12" fill="#ff8200" text-anchor="middle" textLength="20.0" lengthAdjust="spacingAndGlyphs" >Roll</text>
<rect x="488.5" y="388.5" width="31" height="42" fill="#ffffcb" stroke="#3c3c3c" stroke-width="1" shape-rendering="crispEdges"/>
<path d="M493.5 402.5v2h8v-12h-2" stroke="#000" stroke-width="1" fill="none" shape-rendering="crispEdges"/>
<rect x="491.5" y="390.5" width="8" height="12" fill="#ffffcb" stroke="#000" stroke-width="1" shape-rendering="crispEdges"/>
<path d="M495.5 390v13M491 394.5h9M491 398.5h9" stroke="#000" stroke-width="1" fill="none" shape-rendering="crispEdges"/>
<rect x="491" y="410" width="4" height="2" fill="#000" shape-rendering="crispEdges"/>
<rect x="496" y="412" width="1" height="1" fill="#000" shape-rendering="crispEdges"/>
<path d="M497.8 412.5h1.8v-3.2M497.9 410.8l1.7-2.3 1.7 2.3" stroke="#000" stroke-width="1.15" fill="none" />
<rect x="508.5" y="408.5" width="4" height="4" fill="#ffffcb" stroke="#000" stroke-width="1" shape-rendering="crispEdges"/>
<rect x="491" y="418" width="4" height="2" fill="#000" shape-rendering="crispEdges"/>
<rect x="496" y="420" width="1" height="1" fill="#000" shape-rendering="crispEdges"/>
<path d="M497.8 420.5h1.8v-3.2M497.9 418.8l1.7-2.3 1.7 2.3" stroke="#000" stroke-width="1.15" fill="none" />
<rect x="508.5" y="416.5" width="4" height="4" fill="#ffffcb" stroke="#000" stroke-width="1" shape-rendering="crispEdges"/>
<rect x="491" y="426" width="4" height="2" fill="#000" shape-rendering="crispEdges"/>
<rect x="496" y="428" width="1" height="1" fill="#000" shape-rendering="crispEdges"/>
<path d="M497.8 428.5h1.8v-3.2M497.9 426.8l1.7-2.3 1.7 2.3" stroke="#000" stroke-width="1.15" fill="none" />
<rect x="508.5" y="424.5" width="4" height="4" fill="#ffffcb" stroke="#000" stroke-width="1" shape-rendering="crispEdges"/>
<rect x="501.5" y="162.5" width="31" height="26" fill="#ffffcb" stroke="#3c3c3c" stroke-width="1" shape-rendering="crispEdges"/>
<path d="M506.5 176.5v2h8v-12h-2" stroke="#000" stroke-width="1" fill="none" shape-rendering="crispEdges"/>
<rect x="504.5" y="164.5" width="8" height="12" fill="#ffffcb" stroke="#000" stroke-width="1" shape-rendering="crispEdges"/>
<path d="M508.5 164v13M504 168.5h9M504 172.5h9" stroke="#000" stroke-width="1" fill="none" shape-rendering="crispEdges"/>
<rect x="504" y="184" width="4" height="2" fill="#000" shape-rendering="crispEdges"/>
<rect x="509" y="186" width="1" height="1" fill="#000" shape-rendering="crispEdges"/>
<path d="M510.8 186.5h1.8v-3.2M510.9 184.8l1.7-2.3 1.7 2.3" stroke="#000" stroke-width="1.15" fill="none" />
<rect x="521.5" y="182.5" width="4" height="4" fill="#ffffcb" stroke="#000" stroke-width="1" shape-rendering="crispEdges"/>
<rect x="1050.5" y="417.5" width="31" height="26" fill="#ffffcb" stroke="#3c3c3c" stroke-width="1" shape-rendering="crispEdges"/>
<path d="M1055.5 431.5v2h8v-12h-2" stroke="#000" stroke-width="1" fill="none" shape-rendering="crispEdges"/>
<rect x="1053.5" y="419.5" width="8" height="12" fill="#ffffcb" stroke="#000" stroke-width="1" shape-rendering="crispEdges"/>
<path d="M1057.5 419v13M1053 423.5h9M1053 427.5h9" stroke="#000" stroke-width="1" fill="none" shape-rendering="crispEdges"/>
<rect x="1053" y="439" width="4" height="2" fill="#000" shape-rendering="crispEdges"/>
<rect x="1058" y="441" width="1" height="1" fill="#000" shape-rendering="crispEdges"/>
<path d="M1059.8 441.5h1.8v-3.2M1059.9 439.8l1.7-2.3 1.7 2.3" stroke="#000" stroke-width="1.15" fill="none" />
<rect x="1070.5" y="437.5" width="4" height="4" fill="#ffffcb" stroke="#000" stroke-width="1" shape-rendering="crispEdges"/>
<rect x="1051.5" y="453.5" width="31" height="26" fill="#ffffcb" stroke="#3c3c3c" stroke-width="1" shape-rendering="crispEdges"/>
<path d="M1056.5 467.5v2h8v-12h-2" stroke="#000" stroke-width="1" fill="none" shape-rendering="crispEdges"/>
<rect x="1054.5" y="455.5" width="8" height="12" fill="#ffffcb" stroke="#000" stroke-width="1" shape-rendering="crispEdges"/>
<path d="M1058.5 455v13M1054 459.5h9M1054 463.5h9" stroke="#000" stroke-width="1" fill="none" shape-rendering="crispEdges"/>
<rect x="1054" y="475" width="4" height="2" fill="#000" shape-rendering="crispEdges"/>
<rect x="1059" y="477" width="1" height="1" fill="#000" shape-rendering="crispEdges"/>
<path d="M1060.8 477.5h1.8v-3.2M1060.9 475.8l1.7-2.3 1.7 2.3" stroke="#000" stroke-width="1.15" fill="none" />
<rect x="1071.5" y="473.5" width="4" height="4" fill="#ffffcb" stroke="#000" stroke-width="1" shape-rendering="crispEdges"/>
<rect x="1053.5" y="549.5" width="31" height="26" fill="#ffffcb" stroke="#3c3c3c" stroke-width="1" shape-rendering="crispEdges"/>
<path d="M1058.5 563.5v2h8v-12h-2" stroke="#000" stroke-width="1" fill="none" shape-rendering="crispEdges"/>
<rect x="1056.5" y="551.5" width="8" height="12" fill="#ffffcb" stroke="#000" stroke-width="1" shape-rendering="crispEdges"/>
<path d="M1060.5 551v13M1056 555.5h9M1056 559.5h9" stroke="#000" stroke-width="1" fill="none" shape-rendering="crispEdges"/>
<rect x="1056" y="571" width="4" height="2" fill="#000" shape-rendering="crispEdges"/>
<rect x="1061" y="573" width="1" height="1" fill="#000" shape-rendering="crispEdges"/>
<path d="M1062.8 573.5h1.8v-3.2M1062.9 571.8l1.7-2.3 1.7 2.3" stroke="#000" stroke-width="1.15" fill="none" />
<rect x="1073.5" y="569.5" width="4" height="4" fill="#ffffcb" stroke="#000" stroke-width="1" shape-rendering="crispEdges"/>
<rect x="1054.5" y="585.5" width="31" height="26" fill="#ffffcb" stroke="#3c3c3c" stroke-width="1" shape-rendering="crispEdges"/>
<path d="M1059.5 599.5v2h8v-12h-2" stroke="#000" stroke-width="1" fill="none" shape-rendering="crispEdges"/>
<rect x="1057.5" y="587.5" width="8" height="12" fill="#ffffcb" stroke="#000" stroke-width="1" shape-rendering="crispEdges"/>
<path d="M1061.5 587v13M1057 591.5h9M1057 595.5h9" stroke="#000" stroke-width="1" fill="none" shape-rendering="crispEdges"/>
<rect x="1057" y="607" width="4" height="2" fill="#000" shape-rendering="crispEdges"/>
<rect x="1062" y="609" width="1" height="1" fill="#000" shape-rendering="crispEdges"/>
<path d="M1063.8 609.5h1.8v-3.2M1063.9 607.8l1.7-2.3 1.7 2.3" stroke="#000" stroke-width="1.15" fill="none" />
<rect x="1074.5" y="605.5" width="4" height="4" fill="#ffffcb" stroke="#000" stroke-width="1" shape-rendering="crispEdges"/>
<rect x="488.5" y="435.5" width="31" height="31" fill="#fff" stroke="#000" stroke-width="1" shape-rendering="crispEdges"/>
<ellipse cx="496.4" cy="442" rx="7.7" ry="6.6" fill="#c6f1f5" stroke="#111" stroke-width="0.9"/>
<text x="490.3" y="445.9" font-size="10.2" fill="#15151f" textLength="12.3" lengthAdjust="spacingAndGlyphs" >SD</text>
<rect x="509" y="439" width="7" height="7" fill="#5a5a5a" shape-rendering="crispEdges"/>
<rect x="510" y="440" width="2" height="2" fill="#a8a8a8" shape-rendering="crispEdges"/>
<rect x="513" y="440" width="2" height="2" fill="#a8a8a8" shape-rendering="crispEdges"/>
<rect x="510" y="443" width="2" height="2" fill="#a8a8a8" shape-rendering="crispEdges"/>
<rect x="513" y="443" width="2" height="2" fill="#a8a8a8" shape-rendering="crispEdges"/>
<path d="M495.5 449.5h-2v6h2M501.5 449.5h2v6h-2" stroke="#ff8200" stroke-width="1" fill="none" shape-rendering="crispEdges"/>
<rect x="495" y="451" width="7" height="3" fill="#ff8200" shape-rendering="crispEdges"/>
<path d="M504 452.5h5.6q2.4 0 2.8-3.2" stroke="#000" stroke-width="1.2" fill="none" />
<path d="M509.4 450l3-3.6 3 3.6z" stroke="#000" stroke-width="0.4" fill="#000" />
<path d="M489 454.5l2.3-2.2 2.4 2.6-2.3 2.2z" stroke="#c00000" stroke-width="0.5" fill="#e81818" />
<path d="M491.3 457.2l2.4-2.2 4.6 5-2.4 2.2z" stroke="#5a4a00" stroke-width="0.6" fill="#f2d84a" />
<path d="M490.4 456.3l2.4-2.2 1 1-2.4 2.3z" stroke="#555" stroke-width="0.3" fill="#8a8a8a" />
<path d="M495.9 462.2l2.4-2.2 1.4 3.8z" stroke="#000" stroke-width="0.6" fill="#fff" />
<path d="M498.5 463.2l1.6 2.4" stroke="#000" stroke-width="1.2" fill="none" />
<text x="506.2" y="464.3" font-size="8.1" fill="#000" textLength="12.3" lengthAdjust="spacingAndGlyphs" >Dbl</text>
<rect x="488.5" y="468.5" width="31" height="31" fill="#fff" stroke="#000" stroke-width="1" shape-rendering="crispEdges"/>
<ellipse cx="496.4" cy="475" rx="7.7" ry="6.6" fill="#c6f1f5" stroke="#111" stroke-width="0.9"/>
<text x="490.3" y="478.9" font-size="10.2" fill="#15151f" textLength="12.3" lengthAdjust="spacingAndGlyphs" >SD</text>
<rect x="509" y="472" width="7" height="7" fill="#5a5a5a" shape-rendering="crispEdges"/>
<rect x="510" y="473" width="2" height="2" fill="#a8a8a8" shape-rendering="crispEdges"/>
<rect x="513" y="473" width="2" height="2" fill="#a8a8a8" shape-rendering="crispEdges"/>
<rect x="510" y="476" width="2" height="2" fill="#a8a8a8" shape-rendering="crispEdges"/>
<rect x="513" y="476" width="2" height="2" fill="#a8a8a8" shape-rendering="crispEdges"/>
<path d="M495.5 482.5h-2v6h2M501.5 482.5h2v6h-2" stroke="#008000" stroke-width="1" fill="none" shape-rendering="crispEdges"/>
<rect x="495" y="484" width="7" height="3" fill="#008000" shape-rendering="crispEdges"/>
<path d="M504 485.5h5.6q2.4 0 2.8-3.2" stroke="#000" stroke-width="1.2" fill="none" />
<path d="M509.4 483l3-3.6 3 3.6z" stroke="#000" stroke-width="0.4" fill="#000" />
<path d="M489 487.5l2.3-2.2 2.4 2.6-2.3 2.2z" stroke="#c00000" stroke-width="0.5" fill="#e81818" />
<path d="M491.3 490.2l2.4-2.2 4.6 5-2.4 2.2z" stroke="#5a4a00" stroke-width="0.6" fill="#f2d84a" />
<path d="M490.4 489.3l2.4-2.2 1 1-2.4 2.3z" stroke="#555" stroke-width="0.3" fill="#8a8a8a" />
<path d="M495.9 495.2l2.4-2.2 1.4 3.8z" stroke="#000" stroke-width="0.6" fill="#fff" />
<path d="M498.5 496.2l1.6 2.4" stroke="#000" stroke-width="1.2" fill="none" />
<text x="501.4" y="497.6" font-size="8.1" fill="#000" textLength="16.7" lengthAdjust="spacingAndGlyphs" >Bool</text>
<rect x="1189.5" y="368.5" width="31" height="31" fill="#fff" stroke="#000" stroke-width="1" shape-rendering="crispEdges"/>
<ellipse cx="1197.4" cy="375" rx="7.7" ry="6.6" fill="#c6f1f5" stroke="#111" stroke-width="0.9"/>
<text x="1191.3" y="378.9" font-size="10.2" fill="#15151f" textLength="12.3" lengthAdjust="spacingAndGlyphs" >SD</text>
<rect x="1210" y="372" width="7" height="7" fill="#5a5a5a" shape-rendering="crispEdges"/>
<rect x="1211" y="373" width="2" height="2" fill="#a8a8a8" shape-rendering="crispEdges"/>
<rect x="1214" y="373" width="2" height="2" fill="#a8a8a8" shape-rendering="crispEdges"/>
<rect x="1211" y="376" width="2" height="2" fill="#a8a8a8" shape-rendering="crispEdges"/>
<rect x="1214" y="376" width="2" height="2" fill="#a8a8a8" shape-rendering="crispEdges"/>
<path d="M1196.5 382.5h-2v6h2M1202.5 382.5h2v6h-2" stroke="#ff8200" stroke-width="1" fill="none" shape-rendering="crispEdges"/>
<rect x="1196" y="384" width="7" height="3" fill="#ff8200" shape-rendering="crispEdges"/>
<path d="M1205 385.5h5.6q2.4 0 2.8-3.2" stroke="#000" stroke-width="1.2" fill="none" />
<path d="M1210.4 383l3-3.6 3 3.6z" stroke="#000" stroke-width="0.4" fill="#000" />
<path d="M1190 387.5l2.3-2.2 2.4 2.6-2.3 2.2z" stroke="#c00000" stroke-width="0.5" fill="#e81818" />
<path d="M1192.3 390.2l2.4-2.2 4.6 5-2.4 2.2z" stroke="#5a4a00" stroke-width="0.6" fill="#f2d84a" />
<path d="M1191.4 389.3l2.4-2.2 1 1-2.4 2.3z" stroke="#555" stroke-width="0.3" fill="#8a8a8a" />
<path d="M1196.9 395.2l2.4-2.2 1.4 3.8z" stroke="#000" stroke-width="0.6" fill="#fff" />
<path d="M1199.5 396.2l1.6 2.4" stroke="#000" stroke-width="1.2" fill="none" />
<text x="1207.2" y="397.3" font-size="8.1" fill="#000" textLength="12.3" lengthAdjust="spacingAndGlyphs" >Dbl</text>
<rect x="476" y="176" width="11" height="17" fill="#fff" stroke="#0000ff" stroke-width="2" shape-rendering="crispEdges"/>
<text x="478.6" y="189.0" font-size="12" fill="#000" textLength="6.0" lengthAdjust="spacingAndGlyphs" >1</text>
<rect x="1034" y="431" width="11" height="17" fill="#fff" stroke="#0000ff" stroke-width="2" shape-rendering="crispEdges"/>
<text x="1036.6" y="444.0" font-size="12" fill="#000" textLength="6.0" lengthAdjust="spacingAndGlyphs" >0</text>
<rect x="1034" y="470" width="11" height="17" fill="#fff" stroke="#0000ff" stroke-width="2" shape-rendering="crispEdges"/>
<text x="1036.6" y="483.0" font-size="12" fill="#000" textLength="6.0" lengthAdjust="spacingAndGlyphs" >1</text>
<rect x="1035" y="563" width="11" height="16" fill="#fff" stroke="#0000ff" stroke-width="2" shape-rendering="crispEdges"/>
<text x="1037.6" y="576.0" font-size="12" fill="#000" textLength="6.0" lengthAdjust="spacingAndGlyphs" >0</text>
<rect x="1035" y="599" width="11" height="17" fill="#fff" stroke="#0000ff" stroke-width="2" shape-rendering="crispEdges"/>
<text x="1037.6" y="612.0" font-size="12" fill="#000" textLength="6.0" lengthAdjust="spacingAndGlyphs" >1</text>
<rect x="557.5" y="172.5" width="7" height="11" fill="#fff" stroke="#008000" stroke-width="1" shape-rendering="crispEdges"/>
<text x="558.7" y="182.2" font-size="10.5" fill="#008000" textLength="5.0" lengthAdjust="spacingAndGlyphs" stroke="#008000" stroke-width="0.3">?</text>
<rect x="690.5" y="542.5" width="7" height="11" fill="#fff" stroke="#008000" stroke-width="1" shape-rendering="crispEdges"/>
<text x="691.7" y="552.2" font-size="10.5" fill="#008000" textLength="5.0" lengthAdjust="spacingAndGlyphs" stroke="#008000" stroke-width="0.3">?</text>
<rect x="793.5" y="538.5" width="7" height="11" fill="#fff" stroke="#008000" stroke-width="1" shape-rendering="crispEdges"/>
<text x="794.7" y="548.2" font-size="10.5" fill="#008000" textLength="5.0" lengthAdjust="spacingAndGlyphs" stroke="#008000" stroke-width="0.3">?</text>
<rect x="631.5" y="188.5" width="31" height="31" fill="#fff" stroke="#000" stroke-width="1" shape-rendering="crispEdges"/>
<rect x="632" y="189" width="30" height="10" fill="#cc0099" shape-rendering="crispEdges"/>
<rect x="632" y="199" width="30" height="1" fill="#000" shape-rendering="crispEdges"/>
<text x="647.0" y="197.3" font-size="9.6" fill="#000" text-anchor="middle" textLength="20.0" lengthAdjust="spacingAndGlyphs" stroke="#000" stroke-width="0.3">navX</text>
<text x="646.5" y="209.7" font-size="7.2" fill="#000" text-anchor="middle" textLength="17.4" lengthAdjust="spacingAndGlyphs" stroke="#000" stroke-width="0.35">ZERO</text>
<text x="647.0" y="216.6" font-size="7.2" fill="#000" text-anchor="middle" textLength="14.0" lengthAdjust="spacingAndGlyphs" stroke="#000" stroke-width="0.35">YAW</text>
<rect x="621.5" y="451.5" width="31" height="16" fill="#ffffcb" stroke="#3c3c3c" stroke-width="1" shape-rendering="crispEdges"/>
<rect x="624.5" y="453.5" width="4" height="4" fill="#ffffcb" stroke="#000" stroke-width="1" shape-rendering="crispEdges"/>
<path d="M630 455.5h4" stroke="#000" stroke-width="1" fill="none" shape-rendering="crispEdges" stroke-dasharray="1 1"/>
<path d="M634 455.5h3M635.5 454v3" stroke="#000" stroke-width="1" fill="none" shape-rendering="crispEdges"/>
<rect x="624.5" y="461.5" width="4" height="4" fill="#ffffcb" stroke="#000" stroke-width="1" shape-rendering="crispEdges"/>
<path d="M630 463.5h4" stroke="#000" stroke-width="1" fill="none" shape-rendering="crispEdges" stroke-dasharray="1 1"/>
<path d="M634 463.5h3M635.5 462v3" stroke="#000" stroke-width="1" fill="none" shape-rendering="crispEdges"/>
<path d="M640 453q-2.2 1-1.6 3.5v4.5q-.6 2.5 1.6 3.5" stroke="#000" stroke-width="1" fill="none" />
<rect x="641.5" y="453.5" width="8" height="12" fill="#ffffcb" stroke="#000" stroke-width="1" shape-rendering="crispEdges"/>
<path d="M645.5 453v13M641 457.5h9M641 461.5h9" stroke="#000" stroke-width="1" fill="none" shape-rendering="crispEdges"/>
<rect x="621.5" y="492.5" width="31" height="16" fill="#ffffcb" stroke="#3c3c3c" stroke-width="1" shape-rendering="crispEdges"/>
<rect x="624.5" y="494.5" width="4" height="4" fill="#ffffcb" stroke="#000" stroke-width="1" shape-rendering="crispEdges"/>
<path d="M630 496.5h4" stroke="#000" stroke-width="1" fill="none" shape-rendering="crispEdges" stroke-dasharray="1 1"/>
<path d="M634 496.5h3M635.5 495v3" stroke="#000" stroke-width="1" fill="none" shape-rendering="crispEdges"/>
<rect x="624.5" y="502.5" width="4" height="4" fill="#ffffcb" stroke="#000" stroke-width="1" shape-rendering="crispEdges"/>
<path d="M630 504.5h4" stroke="#000" stroke-width="1" fill="none" shape-rendering="crispEdges" stroke-dasharray="1 1"/>
<path d="M634 504.5h3M635.5 503v3" stroke="#000" stroke-width="1" fill="none" shape-rendering="crispEdges"/>
<path d="M640 494q-2.2 1-1.6 3.5v4.5q-.6 2.5 1.6 3.5" stroke="#000" stroke-width="1" fill="none" />
<rect x="641.5" y="494.5" width="8" height="12" fill="#ffffcb" stroke="#000" stroke-width="1" shape-rendering="crispEdges"/>
<path d="M645.5 494v13M641 498.5h9M641 502.5h9" stroke="#000" stroke-width="1" fill="none" shape-rendering="crispEdges"/>
<rect x="620.5" y="540.5" width="31" height="16" fill="#ffffcb" stroke="#3c3c3c" stroke-width="1" shape-rendering="crispEdges"/>
<rect x="623.5" y="542.5" width="4" height="4" fill="#ffffcb" stroke="#000" stroke-width="1" shape-rendering="crispEdges"/>
<path d="M629 544.5h4" stroke="#000" stroke-width="1" fill="none" shape-rendering="crispEdges" stroke-dasharray="1 1"/>
<path d="M633 544.5h3M634.5 543v3" stroke="#000" stroke-width="1" fill="none" shape-rendering="crispEdges"/>
<rect x="623.5" y="550.5" width="4" height="4" fill="#ffffcb" stroke="#000" stroke-width="1" shape-rendering="crispEdges"/>
<path d="M629 552.5h4" stroke="#000" stroke-width="1" fill="none" shape-rendering="crispEdges" stroke-dasharray="1 1"/>
<path d="M633 552.5h3M634.5 551v3" stroke="#000" stroke-width="1" fill="none" shape-rendering="crispEdges"/>
<path d="M639 542q-2.2 1-1.6 3.5v4.5q-.6 2.5 1.6 3.5" stroke="#000" stroke-width="1" fill="none" />
<rect x="640.5" y="542.5" width="8" height="12" fill="#ffffcb" stroke="#000" stroke-width="1" shape-rendering="crispEdges"/>
<path d="M644.5 542v13M640 546.5h9M640 550.5h9" stroke="#000" stroke-width="1" fill="none" shape-rendering="crispEdges"/>
<rect x="670.5" y="455.5" width="8" height="8" fill="#ffffcb" stroke="#5e5e40" stroke-width="1" shape-rendering="crispEdges"/>
<path d="M674 457.5h-1.5v4h1.5M675 457.5h1.5v4h-1.5" stroke="#ff8200" stroke-width="1" fill="none" shape-rendering="crispEdges"/>
<rect x="670.5" y="496.5" width="8" height="8" fill="#ffffcb" stroke="#5e5e40" stroke-width="1" shape-rendering="crispEdges"/>
<path d="M674 498.5h-1.5v4h1.5M675 498.5h1.5v4h-1.5" stroke="#ff8200" stroke-width="1" fill="none" shape-rendering="crispEdges"/>
<rect x="670.5" y="544.5" width="8" height="8" fill="#ffffcb" stroke="#5e5e40" stroke-width="1" shape-rendering="crispEdges"/>
<path d="M674 546.5h-1.5v4h1.5M675 546.5h1.5v4h-1.5" stroke="#008000" stroke-width="1" fill="none" shape-rendering="crispEdges"/>
<rect x="1003.5" y="452.5" width="8" height="8" fill="#ffffcb" stroke="#5e5e40" stroke-width="1" shape-rendering="crispEdges"/>
<path d="M1007 454.5h-1.5v4h1.5M1008 454.5h1.5v4h-1.5" stroke="#ff8200" stroke-width="1" fill="none" shape-rendering="crispEdges"/>
<rect x="1003.5" y="552.5" width="8" height="8" fill="#ffffcb" stroke="#5e5e40" stroke-width="1" shape-rendering="crispEdges"/>
<path d="M1007 554.5h-1.5v4h1.5M1008 554.5h1.5v4h-1.5" stroke="#008000" stroke-width="1" fill="none" shape-rendering="crispEdges"/>
<rect x="690" y="496" width="8" height="8" fill="#ff8200" shape-rendering="crispEdges"/>
<path d="M690.5 504v-7.5h7.5" stroke="#c25a00" stroke-width="1" fill="none" shape-rendering="crispEdges"/>
<rect x="816" y="435" width="8" height="8" fill="#ff8200" shape-rendering="crispEdges"/>
<path d="M816.5 443v-7.5h7.5" stroke="#c25a00" stroke-width="1" fill="none" shape-rendering="crispEdges"/>
<rect x="817" y="581" width="8" height="8" fill="#ff8200" shape-rendering="crispEdges"/>
<path d="M817.5 589v-7.5h7.5" stroke="#c25a00" stroke-width="1" fill="none" shape-rendering="crispEdges"/>
<rect x="985" y="480" width="8" height="8" fill="#ff8200" shape-rendering="crispEdges"/>
<path d="M985.5 488v-7.5h7.5" stroke="#c25a00" stroke-width="1" fill="none" shape-rendering="crispEdges"/>
<rect x="780" y="540" width="9" height="9" fill="#006400" shape-rendering="crispEdges"/>
<rect x="985" y="552" width="8" height="9" fill="#006400" shape-rendering="crispEdges"/>
<path d="M710.5 489.5L730.5 499.5L710.5 509.5Z" stroke="#3c3c3c" stroke-width="1" fill="#ffffcb" />
<path d="M716.5 495v9M719.5 495v9" stroke="#000" stroke-width="1.3" fill="none" />
<path d="M739.5 534.5L759.5 544.5L739.5 554.5Z" stroke="#3c3c3c" stroke-width="1" fill="#ffffcb" />
<text x="744.4" y="549.2" font-size="13" fill="#000" font-weight="bold" textLength="7.5" lengthAdjust="spacingAndGlyphs" >&gt;</text>
<rect x="716" y="551" width="17" height="17" fill="#fff" stroke="#ff8200" stroke-width="2" shape-rendering="crispEdges"/>
<text x="718.4" y="564.2" font-size="12" fill="#000" textLength="12.4" lengthAdjust="spacingAndGlyphs" >10</text>
<rect x="809" y="508" width="24" height="17" fill="#fff" stroke="#ff8200" stroke-width="2" shape-rendering="crispEdges"/>
<text x="811.6" y="521.4" font-size="12" fill="#000" textLength="19.0" lengthAdjust="spacingAndGlyphs" >180</text>
<path d="M838.5 495.5L858.5 505.5L838.5 515.5Z" stroke="#3c3c3c" stroke-width="1" fill="#ffffcb" />
<path d="M841 505.5h7" stroke="#000" stroke-width="1.2" fill="none" />
<rect x="843.8" y="501.8" width="1.5" height="1.6" fill="#000" />
<rect x="843.8" y="507.8" width="1.5" height="1.6" fill="#000" />
<path d="M868.5 509.5L888.5 519.5L868.5 529.5Z" stroke="#3c3c3c" stroke-width="1" fill="#ffffcb" />
<path d="M872.8 517.2l4.6 4.6M877.4 517.2l-4.6 4.6" stroke="#000" stroke-width="1.3" fill="none" />
<rect x="847" y="523" width="14" height="14" fill="#fff" stroke="#ff8200" stroke-width="2" shape-rendering="crispEdges"/>
<path d="M850.6 528.5h7.2M852.6 528.5v5M855.8 528.5v5" stroke="#ff8200" stroke-width="1.1" fill="none" />
<rect x="894.5" y="503.5" width="31" height="31" fill="#ffffcb" stroke="#3c3c3c" stroke-width="1" shape-rendering="crispEdges"/>
<path d="M896 519.5h28M896 507.5h28M896 530.5h15" stroke="#3c3c3c" stroke-width="1" fill="none" shape-rendering="crispEdges" stroke-dasharray="1 2"/>
<path d="M910.5 505v28" stroke="#3c3c3c" stroke-width="1" fill="none" shape-rendering="crispEdges" stroke-dasharray="1 2"/>
<rect x="911" y="527" width="14" height="7" fill="#ffffcb" />
<path d="M896.0 519.5 L897.0 522.1 L898.0 524.5 L899.0 526.7 L900.0 528.5 L901.0 529.9 L902.0 530.7 L903.0 531.0 L904.0 530.7 L905.0 529.9 L906.0 528.5 L907.0 526.7 L908.0 524.5 L909.0 522.1 L910.0 519.5 L911.0 516.9 L912.0 514.5 L913.0 512.3 L914.0 510.5 L915.0 509.1 L916.0 508.3 L917.0 508.0 L918.0 508.3 L919.0 509.1 L920.0 510.5 L921.0 512.3 L922.0 514.5 L923.0 516.9 L924.0 519.5" stroke="#3c3c3c" stroke-width="1" fill="none" />
<text x="912.0" y="532.6" font-size="6.8" fill="#333" textLength="12.4" lengthAdjust="spacingAndGlyphs" stroke="#333" stroke-width="0.35">SIN</text>
<path d="M935.5 505.5L955.5 515.5L935.5 525.5Z" stroke="#3c3c3c" stroke-width="1" fill="#ffffcb" />
<text x="936.9" y="518.4" font-size="8" fill="#333" textLength="9.4" lengthAdjust="spacingAndGlyphs" stroke="#333" stroke-width="0.35">(-x)</text>
<rect x="969" y="531" width="14" height="12" fill="#fff" stroke="#008000" stroke-width="2" shape-rendering="crispEdges"/>
<rect x="971" y="533" width="10" height="8" fill="#008000" shape-rendering="crispEdges"/>
<text x="973.0" y="540.4" font-size="8.6" fill="#fff" font-weight="bold" textLength="6.0" lengthAdjust="spacingAndGlyphs" >T</text>
<rect x="552" y="604" width="30" height="21" fill="#ffffd2" stroke="#008000" stroke-width="2" shape-rendering="crispEdges"/>
<path d="M551 614.5h32" stroke="#008000" stroke-width="1" fill="none" shape-rendering="crispEdges"/>
<path d="M561 609h16" stroke="#008000" stroke-width="2" fill="none" shape-rendering="crispEdges"/>
<path d="M562.5 605.8v6.4l-5.4-3.2z" stroke="#008000" stroke-width="0.3" fill="#008000" />
<rect x="566.4" y="616.6" width="1.6" height="1.6" fill="#008000" />
<path d="M567.2 619.5v1.5" stroke="#008000" stroke-width="1.4" fill="none" />
<path d="M564.2 624.4l3-4 3 4" stroke="#008000" stroke-width="1.3" fill="#fff" />
<rect x="626" y="603" width="30" height="22" fill="#ffffd2" stroke="#008000" stroke-width="2" shape-rendering="crispEdges"/>
<path d="M625 613.5h32" stroke="#008000" stroke-width="1" fill="none" shape-rendering="crispEdges"/>
<path d="M635 608h16" stroke="#008000" stroke-width="2" fill="none" shape-rendering="crispEdges"/>
<path d="M636.5 604.8v6.4l-5.4-3.2z" stroke="#008000" stroke-width="0.3" fill="#008000" />
<rect x="640.4" y="615.6" width="1.6" height="1.6" fill="#008000" />
<path d="M641.2 618.5v1.5" stroke="#008000" stroke-width="1.4" fill="none" />
<path d="M638.2 624.4l3-4 3 4" stroke="#008000" stroke-width="1.3" fill="#fff" />
<rect x="527" y="614" width="14" height="12" fill="#fff" stroke="#008000" stroke-width="2" shape-rendering="crispEdges"/>
<text x="531.3" y="623.6" font-size="8.8" fill="#008000" font-weight="bold" textLength="5.6" lengthAdjust="spacingAndGlyphs" >F</text>
<rect x="601" y="614" width="14" height="12" fill="#fff" stroke="#008000" stroke-width="2" shape-rendering="crispEdges"/>
<text x="605.3" y="623.6" font-size="8.8" fill="#008000" font-weight="bold" textLength="5.6" lengthAdjust="spacingAndGlyphs" >F</text>
<rect x="1136.5" y="378.5" width="31" height="31" fill="#fff" stroke="#000" stroke-width="1" shape-rendering="crispEdges"/>
<rect x="1137" y="379" width="30" height="10" fill="#ffff00" shape-rendering="crispEdges"/>
<rect x="1137" y="389" width="30" height="1" fill="#000" shape-rendering="crispEdges"/>
<text x="1152.0" y="387.3" font-size="8.6" fill="#000" font-weight="bold" text-anchor="middle" textLength="19.5" lengthAdjust="spacingAndGlyphs" >Drive</text>
<text x="1138.0" y="398.0" font-size="8" fill="#000" textLength="29.0" lengthAdjust="spacingAndGlyphs" stroke="#000" stroke-width="0.35">Holonmc</text>
<text x="1138.0" y="407.7" font-size="8" fill="#000" textLength="18.0" lengthAdjust="spacingAndGlyphs" stroke="#000" stroke-width="0.35">Drive</text>
<rect x="1099.5" y="417.5" width="131" height="18" fill="#fff" stroke="#0000ff" stroke-width="1" shape-rendering="crispEdges"/>
<rect x="1097.5" y="415.5" width="131" height="18" fill="#fff" stroke="#0000ff" stroke-width="1" shape-rendering="crispEdges"/>
<text x="1100.6" y="428.6" font-size="12" fill="#000" textLength="113.0" lengthAdjust="spacingAndGlyphs" >Mecanum - Cartesian</text>
<path d="M1218.4 422h7.6l-3.8 4.6z" stroke="#0000ff" stroke-width="0.3" fill="#0000ff" />
<rect x="15" y="87" width="443" height="155" fill="#cef3ce" />
<rect x="15" y="87" width="443" height="2" fill="#ff00ff" />
<rect x="15" y="240" width="443" height="2" fill="#ff00ff" />
<rect x="15" y="87" width="4" height="155" fill="#ff00ff" />
<rect x="456" y="87" width="2" height="155" fill="#ff00ff" />
<text x="20.5" y="100.6" font-size="12" fill="#000" textLength="409.0" lengthAdjust="spacingAndGlyphs" xml:space="preserve">This VI is called each time a TeleOp DS packet is received.  Use it to respond to</text>
<text x="20.5" y="115.6" font-size="12" fill="#000" textLength="191.5" lengthAdjust="spacingAndGlyphs" xml:space="preserve">new joystick or Driver Station values.</text>
<text x="20.5" y="145.6" font-size="12" fill="#000" textLength="387.0" lengthAdjust="spacingAndGlyphs" xml:space="preserve">Common tasks include reading  joysticks, updating motors, and updating</text>
<text x="20.5" y="160.6" font-size="12" fill="#000" textLength="395.0" lengthAdjust="spacingAndGlyphs" xml:space="preserve">setpoints for periodic loops.  This example uses the navX MXP Yaw angle to</text>
<text x="20.5" y="175.6" font-size="12" fill="#000" textLength="406.0" lengthAdjust="spacingAndGlyphs" xml:space="preserve">control Field-Centric Drive, as well as provide a "rotate to angle" feature.  If</text>
<text x="20.5" y="190.6" font-size="12" fill="#000" textLength="427.0" lengthAdjust="spacingAndGlyphs" xml:space="preserve">"rotate-to-angle" is used while in motion, it causes the robot to drive in a straight</text>
<text x="20.5" y="205.6" font-size="12" fill="#000" textLength="181.5" lengthAdjust="spacingAndGlyphs" xml:space="preserve">line, correcting for any lateral drift.</text>
<text x="20.5" y="235.6" font-size="12" fill="#000" textLength="282.5" lengthAdjust="spacingAndGlyphs" xml:space="preserve">You can open I/O on the FIRST Call, or in the Begin.vi.</text>
<text x="15.4" y="251.7" font-size="12" fill="#000" textLength="57.2" lengthAdjust="spacingAndGlyphs" >Match Info</text>
<rect x="14.5" y="281.5" width="181" height="31" fill="#ffffcb" stroke="#000" stroke-width="1" />
<text x="17.3" y="293.6" font-size="12" fill="#000" textLength="175.4" lengthAdjust="spacingAndGlyphs" xml:space="preserve">This can help determine what has</text>
<text x="17.3" y="308.4" font-size="12" fill="#000" textLength="139.0" lengthAdjust="spacingAndGlyphs" xml:space="preserve">been run and for how long</text>
<rect x="273.5" y="247.5" width="136" height="31" fill="#ffffcb" stroke="#000" stroke-width="1" />
<text x="275.7" y="259.8" font-size="12" fill="#000" textLength="112.0" lengthAdjust="spacingAndGlyphs" xml:space="preserve">Read Joystick X and Y</text>
<text x="275.7" y="274.7" font-size="12" fill="#000" textLength="131.3" lengthAdjust="spacingAndGlyphs" xml:space="preserve">and update motor values</text>
<text x="15.4" y="372.6" font-size="12" fill="#000" textLength="63.0" lengthAdjust="spacingAndGlyphs" >Call Context</text>
<rect x="14.5" y="401.5" width="175" height="31" fill="#ffffcb" stroke="#000" stroke-width="1" />
<text x="16.5" y="414.0" font-size="12" fill="#000" textLength="147.0" lengthAdjust="spacingAndGlyphs" xml:space="preserve">Use to differentiate between</text>
<text x="16.5" y="428.9" font-size="12" fill="#000" textLength="171.0" lengthAdjust="spacingAndGlyphs" xml:space="preserve">First, Last, and Intermediate calls</text>
<rect x="16.5" y="481.5" width="166" height="31" fill="#ffffcb" stroke="#000" stroke-width="1" />
<text x="18.5" y="494.0" font-size="12" fill="#000" textLength="162.0" lengthAdjust="spacingAndGlyphs" xml:space="preserve">Each time we enter, report that</text>
<text x="18.5" y="508.9" font-size="12" fill="#000" textLength="115.0" lengthAdjust="spacingAndGlyphs" xml:space="preserve">we are running teleop</text>
<rect x="19.5" y="557.5" width="169" height="46" fill="#ffffcb" stroke="#000" stroke-width="1" />
<text x="21.5" y="569.5" font-size="12" fill="#000" textLength="158.0" lengthAdjust="spacingAndGlyphs" xml:space="preserve">These are examples of reading</text>
<text x="21.5" y="584.5" font-size="12" fill="#000" textLength="151.0" lengthAdjust="spacingAndGlyphs" xml:space="preserve">dashboard controls from the</text>
<text x="21.5" y="599.5" font-size="12" fill="#000" textLength="46.0" lengthAdjust="spacingAndGlyphs" xml:space="preserve">Basic tab</text>
<rect x="368.5" y="510.5" width="152" height="31" fill="#ffffcb" stroke="#000" stroke-width="1" />
<text x="370.6" y="522.6" font-size="12" fill="#000" textLength="147.5" lengthAdjust="spacingAndGlyphs" xml:space="preserve">Publish the joystick data the</text>
<text x="370.6" y="537.5" font-size="12" fill="#000" textLength="146.0" lengthAdjust="spacingAndGlyphs" xml:space="preserve">robot sees to the dashboard</text>
<rect x="599.5" y="236.5" width="307" height="16" fill="#ffffcb" stroke="#000" stroke-width="1" />
<text x="601.6" y="248.6" font-size="12" fill="#000" textLength="302.0" lengthAdjust="spacingAndGlyphs" xml:space="preserve">Use the navX MXP Yaw angle to rotate the joystick inputs.</text>
<rect x="476.5" y="259.5" width="298" height="61" fill="#ffffcb" stroke="#000" stroke-width="1" />
<text x="478.9" y="271.8" font-size="12" fill="#000" textLength="291.0" lengthAdjust="spacingAndGlyphs" xml:space="preserve">Use the navX MXP Pitch (X-axis) and Roll (Y-axis) angles</text>
<text x="478.9" y="286.8" font-size="12" fill="#000" textLength="281.0" lengthAdjust="spacingAndGlyphs" xml:space="preserve">to automatically balance the robot whenever either of</text>
<text x="478.9" y="301.8" font-size="12" fill="#000" textLength="291.0" lengthAdjust="spacingAndGlyphs" xml:space="preserve">these angles exceeds an "out of balance" threshold, and</text>
<text x="478.9" y="316.8" font-size="12" fill="#000" textLength="293.5" lengthAdjust="spacingAndGlyphs" xml:space="preserve">until that angle again reaches an "in balance" threshold.</text>
<rect x="1227.5" y="366.5" width="164" height="31" fill="#ffffcb" stroke="#000" stroke-width="1" />
<text x="1229.9" y="378.9" font-size="12" fill="#000" textLength="159.0" lengthAdjust="spacingAndGlyphs" xml:space="preserve">Publish the Robot Drive Motor</text>
<text x="1229.9" y="393.7" font-size="12" fill="#000" textLength="125.0" lengthAdjust="spacingAndGlyphs" xml:space="preserve">values to the dashboard</text>
<rect x="519.5" y="658.5" width="62" height="46" fill="#ffffcb" stroke="#000" stroke-width="1" />
<text x="521.6" y="671.1" font-size="12" fill="#000" textLength="57.0" lengthAdjust="spacingAndGlyphs" xml:space="preserve">X-axis auto</text>
<text x="521.6" y="685.9" font-size="12" fill="#000" textLength="52.5" lengthAdjust="spacingAndGlyphs" xml:space="preserve">balance in</text>
<text x="521.6" y="700.7" font-size="12" fill="#000" textLength="44.5" lengthAdjust="spacingAndGlyphs" xml:space="preserve">progress</text>
<rect x="611.5" y="658.5" width="62" height="46" fill="#ffffcb" stroke="#000" stroke-width="1" />
<text x="613.6" y="671.1" font-size="12" fill="#000" textLength="57.0" lengthAdjust="spacingAndGlyphs" xml:space="preserve">Y-axis auto</text>
<text x="613.6" y="685.9" font-size="12" fill="#000" textLength="52.5" lengthAdjust="spacingAndGlyphs" xml:space="preserve">balance in</text>
<text x="613.6" y="700.7" font-size="12" fill="#000" textLength="44.5" lengthAdjust="spacingAndGlyphs" xml:space="preserve">progress</text>
<rect x="307" y="324" width="74" height="19" fill="#ff00ff" shape-rendering="crispEdges"/>
<rect x="311" y="326" width="68" height="15" fill="#fff" shape-rendering="crispEdges"/>
<text x="312.4" y="337.5" font-size="12" fill="#000" textLength="64.6" lengthAdjust="spacingAndGlyphs" >Four Motors</text>
<rect x="322" y="388" width="59" height="19" fill="#ff00ff" shape-rendering="crispEdges"/>
<rect x="326" y="390" width="53" height="15" fill="#fff" shape-rendering="crispEdges"/>
<text x="326.9" y="401.8" font-size="12" fill="#000" textLength="50.4" lengthAdjust="spacingAndGlyphs" >Joystick 0</text>
<rect x="327" y="431" width="88" height="19" fill="#ff00ff" shape-rendering="crispEdges"/>
<rect x="331" y="433" width="82" height="15" fill="#fff" shape-rendering="crispEdges"/>
<text x="331.8" y="445.0" font-size="12" fill="#000" textLength="79.2" lengthAdjust="spacingAndGlyphs" >Joystick 0/Axes</text>
<rect x="311" y="463" width="105" height="19" fill="#ff00ff" shape-rendering="crispEdges"/>
<rect x="315" y="465" width="99" height="15" fill="#fff" shape-rendering="crispEdges"/>
<text x="315.8" y="476.4" font-size="12" fill="#000" textLength="96.0" lengthAdjust="spacingAndGlyphs" >Joystick 0/Buttons</text>
<rect x="16" y="614" width="74" height="19" fill="#ff00ff" shape-rendering="crispEdges"/>
<rect x="20" y="616" width="68" height="15" fill="#fff" shape-rendering="crispEdges"/>
<text x="21.5" y="627.4" font-size="12" fill="#000" textLength="64.0" lengthAdjust="spacingAndGlyphs" >DB/Button 0</text>
<rect x="16" y="658" width="74" height="19" fill="#ff00ff" shape-rendering="crispEdges"/>
<rect x="20" y="660" width="68" height="15" fill="#fff" shape-rendering="crispEdges"/>
<text x="21.5" y="671.3" font-size="12" fill="#000" textLength="63.0" lengthAdjust="spacingAndGlyphs" >DB/Button 1</text>
<rect x="23" y="703" width="67" height="19" fill="#ff00ff" shape-rendering="crispEdges"/>
<rect x="27" y="705" width="61" height="15" fill="#fff" shape-rendering="crispEdges"/>
<text x="28.6" y="716.4" font-size="12" fill="#000" textLength="56.8" lengthAdjust="spacingAndGlyphs" >DB/Slider 0</text>
<rect x="1170" y="336" width="109" height="19" fill="#ff00ff" shape-rendering="crispEdges"/>
<rect x="1174" y="338" width="103" height="15" fill="#fff" shape-rendering="crispEdges"/>
<text x="1175.4" y="349.5" font-size="12" fill="#000" textLength="99.5" lengthAdjust="spacingAndGlyphs" >RobotDrive Motors</text>
<text x="192.5" y="611.3" font-size="12" fill="#000" textLength="94.0" lengthAdjust="spacingAndGlyphs" >Sample Boolean 0</text>
<text x="192.5" y="654.1" font-size="12" fill="#000" textLength="93.0" lengthAdjust="spacingAndGlyphs" >Sample Boolean 1</text>
<text x="192.5" y="693.3" font-size="12" fill="#000" textLength="80.0" lengthAdjust="spacingAndGlyphs" >Sample Slider 0</text>
<rect x="579.5" y="165.5" width="315" height="16" fill="#ffffcb" stroke="#000" stroke-width="1" />
<text x="581.5" y="177.2" font-size="12" fill="#000" textLength="310.5" lengthAdjust="spacingAndGlyphs" xml:space="preserve">Reset the Yaw angle when a button is pressed by the driver.</text>
<rect x="699.5" y="455.5" width="82" height="31" fill="#ffffcb" stroke="#000" stroke-width="1" />
<text x="701.9" y="467.5" font-size="12" fill="#000" textLength="76.5" lengthAdjust="spacingAndGlyphs" xml:space="preserve">Out of balance</text>
<text x="701.9" y="482.3" font-size="12" fill="#000" textLength="51.0" lengthAdjust="spacingAndGlyphs" xml:space="preserve">Threshold</text>
<rect x="803.5" y="547.5" width="170" height="31" fill="#ffffcb" stroke="#000" stroke-width="1" />
<text x="805.9" y="559.8" font-size="12" fill="#000" textLength="161.8" lengthAdjust="spacingAndGlyphs" xml:space="preserve">Autobalance, set motor output</text>
<text x="805.9" y="574.7" font-size="12" fill="#000" textLength="141.0" lengthAdjust="spacingAndGlyphs" xml:space="preserve">to -sin of angle (in radians)</text>
<path d="M910.4 652L903.4 597" stroke="#000" stroke-width="1.8" fill="none" />
<path d="M902.2 589.6l5.4 9.4-8.4 1.2z" stroke="#000" stroke-width="0.5" fill="#000" />
<rect x="780.5" y="651.5" width="269" height="74" fill="#ffffcb" stroke="#000" stroke-width="1" shape-rendering="crispEdges"/>
<text x="783.0" y="663.8" font-size="12" fill="#000" textLength="245.0" lengthAdjust="spacingAndGlyphs" xml:space="preserve">You may want to replace this code that dervies</text>
<text x="783.0" y="678.8" font-size="12" fill="#000" textLength="248.0" lengthAdjust="spacingAndGlyphs" xml:space="preserve">the motor output value using the inverse of the</text>
<text x="783.0" y="693.8" font-size="12" fill="#000" textLength="252.0" lengthAdjust="spacingAndGlyphs" xml:space="preserve">sin of the "out of balance" angle.  Replacing this</text>
<text x="783.0" y="708.8" font-size="12" fill="#000" textLength="259.2" lengthAdjust="spacingAndGlyphs" xml:space="preserve">with a PID controller will allow for tuning for your</text>
<text x="783.0" y="723.8" font-size="12" fill="#000" textLength="31.5" lengthAdjust="spacingAndGlyphs" xml:space="preserve">robot.</text>
<rect x="780" y="651" width="6" height="6" fill="#3e96fb" shape-rendering="crispEdges"/>
<rect x="780" y="685" width="6" height="6" fill="#3e96fb" shape-rendering="crispEdges"/>
<rect x="780" y="720" width="6" height="6" fill="#3e96fb" shape-rendering="crispEdges"/>
<rect x="912" y="651" width="6" height="6" fill="#3e96fb" shape-rendering="crispEdges"/>
<rect x="912" y="720" width="6" height="6" fill="#3e96fb" shape-rendering="crispEdges"/>
<rect x="1044" y="651" width="6" height="6" fill="#3e96fb" shape-rendering="crispEdges"/>
<rect x="1044" y="685" width="6" height="6" fill="#3e96fb" shape-rendering="crispEdges"/>
<rect x="1044" y="720" width="6" height="6" fill="#3e96fb" shape-rendering="crispEdges"/>
<rect x="1411" y="79" width="16" height="677" fill="#f0f0f0" />
<rect x="1411" y="199" width="16" height="443" fill="#cdcdcd" />
<path d="M1415.2 91.6l3.8-3.7 3.8 3.7" stroke="#505050" stroke-width="2" fill="none" />
<path d="M1415.2 743.4l3.8 3.7 3.8-3.7" stroke="#505050" stroke-width="2" fill="none" />
<rect x="2" y="756" width="1426" height="14" fill="#f0f0f0" />
<rect x="363" y="756" width="826" height="14" fill="#cdcdcd" />
<rect x="2" y="756" width="146" height="14" fill="#fff" />
<rect x="2" y="755" width="146" height="1" fill="#000" shape-rendering="crispEdges"/>
<rect x="2" y="755" width="1" height="15" fill="#000" shape-rendering="crispEdges"/>
<rect x="147" y="756" width="1" height="14" fill="#c8c8c8" shape-rendering="crispEdges"/>
<text x="5.6" y="766.8" font-size="12" fill="#000" textLength="139.0" lengthAdjust="spacingAndGlyphs" >NavX Project.lvproj/Target</text>
<path d="M157 759.8l-3.8 3.7 3.8 3.7" stroke="#505050" stroke-width="2" fill="none" />
<path d="M1402.3 759.8l3.8 3.7-3.8 3.7" stroke="#505050" stroke-width="2" fill="none" />
<rect x="1424" y="759" width="2" height="2" fill="#b8b8b8" shape-rendering="crispEdges"/>
<rect x="1424" y="762" width="2" height="2" fill="#b8b8b8" shape-rendering="crispEdges"/>
<rect x="1424" y="765" width="2" height="2" fill="#b8b8b8" shape-rendering="crispEdges"/>
<rect x="1421" y="762" width="2" height="2" fill="#b8b8b8" shape-rendering="crispEdges"/>
<rect x="1421" y="765" width="2" height="2" fill="#b8b8b8" shape-rendering="crispEdges"/>
<rect x="1418" y="765" width="2" height="2" fill="#b8b8b8" shape-rendering="crispEdges"/>
</svg>
</body></html>
